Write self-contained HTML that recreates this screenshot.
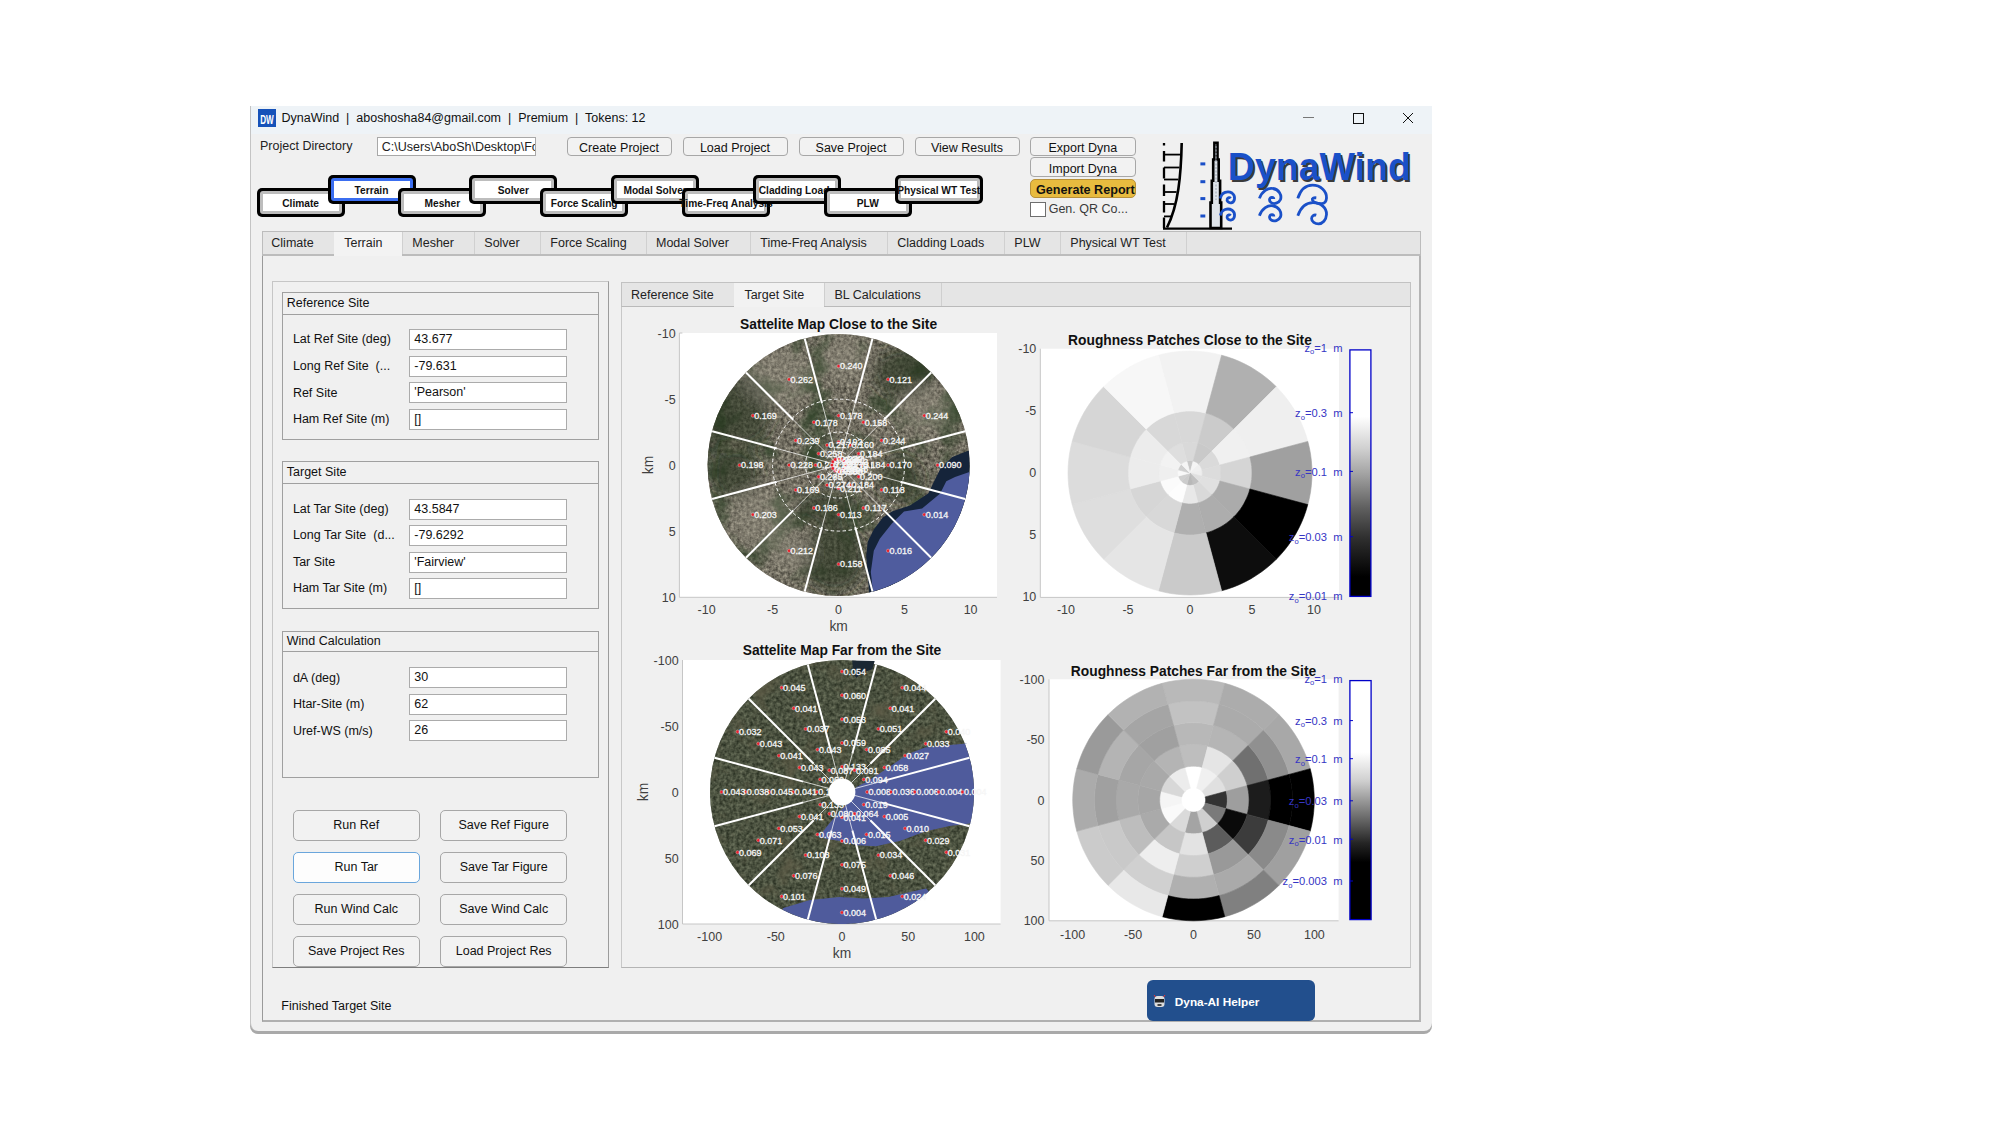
<!DOCTYPE html>
<html><head><meta charset="utf-8"><title>DynaWind</title>
<style>
html,body{margin:0;padding:0;}
body{width:2001px;height:1125px;position:relative;overflow:hidden;background:#fff;font-family:"Liberation Sans",sans-serif;font-size:12.5px;color:#000;}
.t{position:absolute;white-space:pre;line-height:1;}
.b{position:absolute;box-sizing:border-box;}
svg{position:absolute;left:0;top:0;overflow:visible;}
</style></head><body>

<div class="b" style="left:250.0px;top:108.0px;width:1182.0px;height:926.0px;background:#a9a9a9;border-radius:0 0 8px 8px;"></div>
<div class="b" style="left:250.0px;top:106.0px;width:1181.5px;height:925.0px;background:#f0f0f0;border-left:1px solid #c4c4c4;border-radius:0 0 8px 8px;"></div>
<div class="b" style="left:251.0px;top:106.0px;width:1180.5px;height:28.0px;background:#eef3f7;"></div>
<div class="b" style="left:258.0px;top:109.0px;width:17.5px;height:17.5px;background:#1652b9;"></div>
<svg width="2001" height="1125" style="pointer-events:none"><g fill="#fff" font-family="Liberation Sans" font-weight="bold"><text x="260.2" y="124" font-size="13" textLength="13.5" lengthAdjust="spacingAndGlyphs">DW</text></g><g stroke="#111" stroke-width="1" fill="none"><line x1="1303" y1="117.5" x2="1314" y2="117.5" stroke="#777"/><rect x="1353.5" y="113.5" width="10" height="10"/><line x1="1403" y1="113" x2="1413" y2="123"/><line x1="1413" y1="113" x2="1403" y2="123"/></g></svg>
<div class="t " style="left:281.5px;top:111.9px;color:#111;">DynaWind  |  aboshosha84@gmail.com  |  Premium  |  Tokens: 12</div>
<div class="t " style="left:260.0px;top:140.2px;color:#222;">Project Directory</div>
<div class="b" style="left:376.5px;top:136.5px;width:159.0px;height:19.5px;background:#fff;border:1px solid #a8a8a8;overflow:hidden;"></div>
<div class="t" style="left:377.5px;top:137.5px;width:157px;height:17px;overflow:hidden;"><div class="t" style="left:4.3px;top:3px;color:#222">C:\Users\AboSh\Desktop\Folder</div></div>
<div class="b" style="left:566.5px;top:136.5px;width:105.0px;height:19.5px;background:#f2f2f2;border:1px solid #a7a7a7;border-radius:4px;"></div>
<div class="t" style="left:566.5px;width:105.0px;top:142.4px;text-align:center;color:#111;">Create Project</div>
<div class="b" style="left:682.5px;top:136.5px;width:105.0px;height:19.5px;background:#f2f2f2;border:1px solid #a7a7a7;border-radius:4px;"></div>
<div class="t" style="left:682.5px;width:105.0px;top:142.4px;text-align:center;color:#111;">Load Project</div>
<div class="b" style="left:798.5px;top:136.5px;width:105.0px;height:19.5px;background:#f2f2f2;border:1px solid #a7a7a7;border-radius:4px;"></div>
<div class="t" style="left:798.5px;width:105.0px;top:142.4px;text-align:center;color:#111;">Save Project</div>
<div class="b" style="left:914.5px;top:136.5px;width:105.0px;height:19.5px;background:#f2f2f2;border:1px solid #a7a7a7;border-radius:4px;"></div>
<div class="t" style="left:914.5px;width:105.0px;top:142.4px;text-align:center;color:#111;">View Results</div>
<div class="b" style="left:1030.0px;top:136.5px;width:105.7px;height:19.5px;background:#f2f2f2;border:1px solid #a7a7a7;border-radius:4px;"></div>
<div class="t" style="left:1030.0px;width:105.7px;top:142.4px;text-align:center;color:#111;">Export Dyna</div>
<div class="b" style="left:1030.0px;top:157.4px;width:105.7px;height:19.6px;background:#f2f2f2;border:1px solid #a7a7a7;border-radius:4px;"></div>
<div class="t" style="left:1030.0px;width:105.7px;top:163.4px;text-align:center;color:#111;">Import Dyna</div>
<div class="b" style="left:1030.0px;top:178.6px;width:105.7px;height:19.6px;background:#e8bb3f;border:1px solid #b8913a;border-radius:5px;overflow:hidden;"></div>
<div class="b" style="left:1031px;top:179.6px;width:103.7px;height:17.6px;overflow:hidden;"><div class="t" style="left:5px;top:4.2px;font-weight:bold;font-size:12.6px;color:#111">Generate Report</div></div>
<div class="b" style="left:1030.0px;top:202.2px;width:15.5px;height:14.6px;background:#fff;border:1px solid #6e6e6e;"></div>
<div class="t " style="left:1048.7px;top:203.0px;color:#3a3a3a;">Gen. QR Co...</div>
<div class="b" style="left:256.6px;top:188.4px;width:88.0px;height:28.4px;background:#000;border-radius:5px;"></div>
<div class="b" style="left:259.6px;top:191.4px;width:82.0px;height:22.4px;background:#fff;border:3px solid #bdbdbd;border-radius:3px;box-shadow:inset 0 0 0 1.2px rgba(255,255,255,0.25);"></div>
<div class="t" style="left:236.6px;width:128.0px;top:198.7px;text-align:center;font-size:10.2px;font-weight:bold;color:#111;">Climate</div>
<div class="b" style="left:327.5px;top:175.4px;width:88.0px;height:28.4px;background:#000;border-radius:5px;"></div>
<div class="b" style="left:330.5px;top:178.4px;width:82.0px;height:22.4px;background:#fff;border:3px solid #3b6ef0;border-radius:3px;box-shadow:inset 0 0 0 1.2px rgba(255,255,255,0.25);"></div>
<div class="t" style="left:307.5px;width:128.0px;top:185.7px;text-align:center;font-size:10.2px;font-weight:bold;color:#111;">Terrain</div>
<div class="b" style="left:398.4px;top:188.4px;width:88.0px;height:28.4px;background:#000;border-radius:5px;"></div>
<div class="b" style="left:401.4px;top:191.4px;width:82.0px;height:22.4px;background:#fff;border:3px solid #bdbdbd;border-radius:3px;box-shadow:inset 0 0 0 1.2px rgba(255,255,255,0.25);"></div>
<div class="t" style="left:378.4px;width:128.0px;top:198.7px;text-align:center;font-size:10.2px;font-weight:bold;color:#111;">Mesher</div>
<div class="b" style="left:469.3px;top:175.4px;width:88.0px;height:28.4px;background:#000;border-radius:5px;"></div>
<div class="b" style="left:472.3px;top:178.4px;width:82.0px;height:22.4px;background:#fff;border:3px solid #bdbdbd;border-radius:3px;box-shadow:inset 0 0 0 1.2px rgba(255,255,255,0.25);"></div>
<div class="t" style="left:449.3px;width:128.0px;top:185.7px;text-align:center;font-size:10.2px;font-weight:bold;color:#111;">Solver</div>
<div class="b" style="left:540.2px;top:188.4px;width:88.0px;height:28.4px;background:#000;border-radius:5px;"></div>
<div class="b" style="left:543.2px;top:191.4px;width:82.0px;height:22.4px;background:#fff;border:3px solid #bdbdbd;border-radius:3px;box-shadow:inset 0 0 0 1.2px rgba(255,255,255,0.25);"></div>
<div class="t" style="left:520.2px;width:128.0px;top:198.7px;text-align:center;font-size:10.2px;font-weight:bold;color:#111;">Force Scaling</div>
<div class="b" style="left:611.1px;top:175.4px;width:88.0px;height:28.4px;background:#000;border-radius:5px;"></div>
<div class="b" style="left:614.1px;top:178.4px;width:82.0px;height:22.4px;background:#fff;border:3px solid #bdbdbd;border-radius:3px;box-shadow:inset 0 0 0 1.2px rgba(255,255,255,0.25);"></div>
<div class="t" style="left:591.1px;width:128.0px;top:185.7px;text-align:center;font-size:10.2px;font-weight:bold;color:#111;">Modal Solver</div>
<div class="b" style="left:682.0px;top:188.4px;width:88.0px;height:28.4px;background:#000;border-radius:5px;"></div>
<div class="b" style="left:685.0px;top:191.4px;width:82.0px;height:22.4px;background:#fff;border:3px solid #bdbdbd;border-radius:3px;box-shadow:inset 0 0 0 1.2px rgba(255,255,255,0.25);"></div>
<div class="t" style="left:662.0px;width:128.0px;top:198.7px;text-align:center;font-size:10.2px;font-weight:bold;color:#111;">Time-Freq Analysis</div>
<div class="b" style="left:752.9px;top:175.4px;width:88.0px;height:28.4px;background:#000;border-radius:5px;"></div>
<div class="b" style="left:755.9px;top:178.4px;width:82.0px;height:22.4px;background:#fff;border:3px solid #bdbdbd;border-radius:3px;box-shadow:inset 0 0 0 1.2px rgba(255,255,255,0.25);"></div>
<div class="t" style="left:732.9px;width:128.0px;top:185.7px;text-align:center;font-size:10.2px;font-weight:bold;color:#111;">Cladding Loads</div>
<div class="b" style="left:823.8px;top:188.4px;width:88.0px;height:28.4px;background:#000;border-radius:5px;"></div>
<div class="b" style="left:826.8px;top:191.4px;width:82.0px;height:22.4px;background:#fff;border:3px solid #bdbdbd;border-radius:3px;box-shadow:inset 0 0 0 1.2px rgba(255,255,255,0.25);"></div>
<div class="t" style="left:803.8px;width:128.0px;top:198.7px;text-align:center;font-size:10.2px;font-weight:bold;color:#111;">PLW</div>
<div class="b" style="left:894.7px;top:175.4px;width:88.0px;height:28.4px;background:#000;border-radius:5px;"></div>
<div class="b" style="left:897.7px;top:178.4px;width:82.0px;height:22.4px;background:#fff;border:3px solid #bdbdbd;border-radius:3px;box-shadow:inset 0 0 0 1.2px rgba(255,255,255,0.25);"></div>
<div class="t" style="left:874.7px;width:128.0px;top:185.7px;text-align:center;font-size:10.2px;font-weight:bold;color:#111;">Physical WT Test</div>
<svg width="2001" height="1125">
<g stroke="#000" fill="none">
<path d="M1164,143 L1164,145.5 M1164,151 L1164,161.5 M1164,167.5 L1164,178.5 M1164,184.5 L1164,196 M1164,201 L1164,212.5 M1164,217.5 L1164,228" stroke-width="2.3"/>
<path d="M1181.7,143 C1181,175 1178.5,205 1167,227.5" stroke-width="2.6"/>
<g stroke-width="1.8"><line x1="1164" y1="154.6" x2="1180.5" y2="154.6"/><line x1="1164" y1="167.5" x2="1179.5" y2="167.5"/><line x1="1164" y1="179.5" x2="1178.3" y2="179.5"/><line x1="1164" y1="192" x2="1176.5" y2="192"/><line x1="1164" y1="204" x2="1174.3" y2="204"/><line x1="1164" y1="216.4" x2="1171" y2="216.4"/></g>
<line x1="1163" y1="228.6" x2="1232" y2="228.6" stroke-width="2.2"/>
<path d="M1210.5,228 L1210.5,202.6 L1211.8,202.6 L1211.8,180.8 L1213.2,180.8 L1213.2,159.5 L1214.4,159.5 L1214.4,142.8 L1217.5,142.8 L1217.5,159.5 L1218.7,159.5 L1218.7,180.8 L1220.1,180.8 L1220.1,202.6 L1221.2,202.6 L1221.2,228 Z" stroke-width="2.6" fill="#dfe4ea"/>
<line x1="1216" y1="146" x2="1216" y2="200" stroke="#9aa4b0" stroke-width="1" stroke-dasharray="2,1.5"/>
</g>
<g fill="#1a4fc8"><rect x="1200.4" y="162.4" width="4.9" height="3"/><rect x="1200.4" y="180.2" width="4.9" height="3"/><rect x="1200.4" y="197.1" width="4.9" height="3"/><rect x="1200.4" y="214.5" width="4.9" height="3"/></g>
<text x="1229.5" y="181.5" font-family="Liberation Sans" font-weight="bold" font-size="38.5" fill="#3a3a3a" textLength="183" lengthAdjust="spacingAndGlyphs">DynaWind</text>
<text x="1227.8" y="179.8" font-family="Liberation Sans" font-weight="bold" font-size="38.5" fill="#1a50c8" textLength="183" lengthAdjust="spacingAndGlyphs">DynaWind</text>
<g stroke="#1a50c8" stroke-width="2.8" fill="none" stroke-linecap="butt">
<path d="M1220.4,198.4 C1221.5,192 1228,190.5 1232,193 C1236,196 1235,202 1231.2,202.8 C1228.5,203.2 1226.5,201 1227.2,199 C1227.8,197.5 1229.8,197.3 1230.6,198.4"/>
<path d="M1220.4,215.6 C1221.5,209.2 1228,207.7 1232,210.2 C1236,213.2 1235,219.2 1231.2,220 C1228.5,220.4 1226.5,218.2 1227.2,216.2 C1227.8,214.7 1229.8,214.5 1230.6,215.6"/>
<path d="M1259.4,198.4 C1262,191 1268,187.5 1273,188.5 C1279,189.5 1282,195 1280.5,199.5 C1279,203 1274,204.8 1271,202.5 C1268.5,200.5 1269.5,197.2 1272,197.3 C1273,197.4 1273.8,198.2 1273.8,199"/>
<path d="M1259.4,215.8 C1262,208.4 1268,204.9 1273,205.9 C1279,206.9 1282,212.4 1280.5,216.9 C1279,220.4 1274,222.2 1271,219.9 C1268.5,217.9 1269.5,214.6 1272,214.7 C1273,214.8 1273.8,215.6 1273.8,216.4"/>
<path d="M1297.8,198.4 C1300.5,190 1306,185.2 1312.5,185.2 C1320.5,185.2 1326.8,191 1326.5,198 C1326.3,201.5 1324.5,203.6 1321.5,203.6 C1318,203.6 1313.5,202.5 1312.4,200 C1311.8,198.5 1313.5,197.5 1316.3,197.8"/>
<path d="M1297.8,215.8 C1300.5,208 1306,202.6 1313,202.6 C1321,202.6 1326.8,208 1326.5,214.5 C1326.2,220 1322.5,223.8 1318.5,223.8 C1315,223.8 1311.5,221.5 1311.6,218.5 C1311.7,216 1314,214.5 1316.3,215.2"/>
</g>
</svg>
<div class="b" style="left:261.5px;top:255.0px;width:1159.5px;height:766.5px;background:#f0f0f0;border-left:1px solid #9a9a9a;border-right:2px solid #b4b4b4;border-bottom:2px solid #b0b0b0;"></div>
<div class="b" style="left:261.5px;top:230.5px;width:1159.5px;height:25.5px;background:#e5e5e5;border:1px solid #bcbcbc;border-bottom:2px solid #bcbcbc;"></div>
<div class="b" style="left:333.9px;top:231.5px;width:1.0px;height:22.5px;background:#d0d0d0;"></div>
<div class="t " style="left:271.3px;top:236.7px;color:#222;">Climate</div>
<div class="b" style="left:334.4px;top:231.5px;width:68.1px;height:24.5px;background:#f3f3f3;"></div>
<div class="b" style="left:402.0px;top:231.5px;width:1.0px;height:22.5px;background:#d0d0d0;"></div>
<div class="t " style="left:344.2px;top:236.7px;color:#222;">Terrain</div>
<div class="b" style="left:474.0px;top:231.5px;width:1.0px;height:22.5px;background:#d0d0d0;"></div>
<div class="t " style="left:412.3px;top:236.7px;color:#222;">Mesher</div>
<div class="b" style="left:540.0px;top:231.5px;width:1.0px;height:22.5px;background:#d0d0d0;"></div>
<div class="t " style="left:484.3px;top:236.7px;color:#222;">Solver</div>
<div class="b" style="left:645.8px;top:231.5px;width:1.0px;height:22.5px;background:#d0d0d0;"></div>
<div class="t " style="left:550.3px;top:236.7px;color:#222;">Force Scaling</div>
<div class="b" style="left:750.0px;top:231.5px;width:1.0px;height:22.5px;background:#d0d0d0;"></div>
<div class="t " style="left:656.0px;top:236.7px;color:#222;">Modal Solver</div>
<div class="b" style="left:887.0px;top:231.5px;width:1.0px;height:22.5px;background:#d0d0d0;"></div>
<div class="t " style="left:760.3px;top:236.7px;color:#222;">Time-Freq Analysis</div>
<div class="b" style="left:1004.0px;top:231.5px;width:1.0px;height:22.5px;background:#d0d0d0;"></div>
<div class="t " style="left:897.3px;top:236.7px;color:#222;">Cladding Loads</div>
<div class="b" style="left:1060.0px;top:231.5px;width:1.0px;height:22.5px;background:#d0d0d0;"></div>
<div class="t " style="left:1014.3px;top:236.7px;color:#222;">PLW</div>
<div class="b" style="left:1185.8px;top:231.5px;width:1.0px;height:22.5px;background:#d0d0d0;"></div>
<div class="t " style="left:1070.3px;top:236.7px;color:#222;">Physical WT Test</div>
<div class="b" style="left:272.0px;top:281.0px;width:337.0px;height:686.5px;border:1px solid #c6c6c6;border-right-color:#9c9c9c;border-bottom-color:#7e7e7e;"></div>
<div class="b" style="left:282.4px;top:292.4px;width:316.6px;height:147.6px;border:1px solid #a0a0a0;"></div>
<div class="b" style="left:283.4px;top:313.6px;width:314.6px;height:1.0px;background:#a0a0a0;"></div>
<div class="t " style="left:286.8px;top:296.5px;color:#111;">Reference Site</div>
<div class="b" style="left:409.3px;top:329.1px;width:157.5px;height:21.0px;background:#fff;border:1px solid #ababab;"></div>
<div class="t " style="left:292.9px;top:333.4px;color:#111;">Lat Ref Site (deg)</div>
<div class="t " style="left:414.3px;top:333.1px;color:#111;">43.677</div>
<div class="b" style="left:409.3px;top:355.6px;width:157.5px;height:21.0px;background:#fff;border:1px solid #ababab;"></div>
<div class="t " style="left:292.9px;top:359.9px;color:#111;">Long Ref Site  (...</div>
<div class="t " style="left:414.3px;top:359.6px;color:#111;">-79.631</div>
<div class="b" style="left:409.3px;top:382.2px;width:157.5px;height:21.0px;background:#fff;border:1px solid #ababab;"></div>
<div class="t " style="left:292.9px;top:386.5px;color:#111;">Ref Site</div>
<div class="t " style="left:414.3px;top:386.2px;color:#111;">'Pearson'</div>
<div class="b" style="left:409.3px;top:408.5px;width:157.5px;height:21.0px;background:#fff;border:1px solid #ababab;"></div>
<div class="t " style="left:292.9px;top:412.8px;color:#111;">Ham Ref Site (m)</div>
<div class="t " style="left:414.3px;top:412.5px;color:#111;">[]</div>
<div class="b" style="left:282.4px;top:461.4px;width:316.6px;height:147.6px;border:1px solid #a0a0a0;"></div>
<div class="b" style="left:283.4px;top:482.5px;width:314.6px;height:1.0px;background:#a0a0a0;"></div>
<div class="t " style="left:286.8px;top:465.5px;color:#111;">Target Site</div>
<div class="b" style="left:409.3px;top:498.5px;width:157.5px;height:21.0px;background:#fff;border:1px solid #ababab;"></div>
<div class="t " style="left:292.9px;top:502.8px;color:#111;">Lat Tar Site (deg)</div>
<div class="t " style="left:414.3px;top:502.5px;color:#111;">43.5847</div>
<div class="b" style="left:409.3px;top:525.0px;width:157.5px;height:21.0px;background:#fff;border:1px solid #ababab;"></div>
<div class="t " style="left:292.9px;top:529.3px;color:#111;">Long Tar Site  (d...</div>
<div class="t " style="left:414.3px;top:529.0px;color:#111;">-79.6292</div>
<div class="b" style="left:409.3px;top:551.5px;width:157.5px;height:21.0px;background:#fff;border:1px solid #ababab;"></div>
<div class="t " style="left:292.9px;top:555.8px;color:#111;">Tar Site</div>
<div class="t " style="left:414.3px;top:555.5px;color:#111;">'Fairview'</div>
<div class="b" style="left:409.3px;top:577.8px;width:157.5px;height:21.0px;background:#fff;border:1px solid #ababab;"></div>
<div class="t " style="left:292.9px;top:582.1px;color:#111;">Ham Tar Site (m)</div>
<div class="t " style="left:414.3px;top:581.8px;color:#111;">[]</div>
<div class="b" style="left:282.4px;top:630.5px;width:316.6px;height:147.0px;border:1px solid #a0a0a0;"></div>
<div class="b" style="left:283.4px;top:651.4px;width:314.6px;height:1.0px;background:#a0a0a0;"></div>
<div class="t " style="left:286.8px;top:634.6px;color:#111;">Wind Calculation</div>
<div class="b" style="left:409.3px;top:667.4px;width:157.5px;height:21.0px;background:#fff;border:1px solid #ababab;"></div>
<div class="t " style="left:292.9px;top:671.7px;color:#111;">dA (deg)</div>
<div class="t " style="left:414.3px;top:671.4px;color:#111;">30</div>
<div class="b" style="left:409.3px;top:693.8px;width:157.5px;height:21.0px;background:#fff;border:1px solid #ababab;"></div>
<div class="t " style="left:292.9px;top:698.1px;color:#111;">Htar-Site (m)</div>
<div class="t " style="left:414.3px;top:697.8px;color:#111;">62</div>
<div class="b" style="left:409.3px;top:720.2px;width:157.5px;height:21.0px;background:#fff;border:1px solid #ababab;"></div>
<div class="t " style="left:292.9px;top:724.5px;color:#111;">Uref-WS (m/s)</div>
<div class="t " style="left:414.3px;top:724.2px;color:#111;">26</div>
<div class="b" style="left:293.0px;top:809.5px;width:126.5px;height:31.0px;background:#f2f2f2;border:1px solid #a7a7a7;border-radius:5px;"></div>
<div class="t" style="left:293.0px;width:126.5px;top:818.7px;text-align:center;color:#111;">Run Ref</div>
<div class="b" style="left:440.4px;top:809.5px;width:126.6px;height:31.0px;background:#f2f2f2;border:1px solid #a7a7a7;border-radius:5px;"></div>
<div class="t" style="left:440.4px;width:126.6px;top:818.7px;text-align:center;color:#111;">Save Ref Figure</div>
<div class="b" style="left:293.0px;top:851.5px;width:126.5px;height:31.0px;background:#fdfdfd;border:1px solid #6aa6dc;border-radius:5px;"></div>
<div class="t" style="left:293.0px;width:126.5px;top:860.7px;text-align:center;color:#111;">Run Tar</div>
<div class="b" style="left:440.4px;top:851.5px;width:126.6px;height:31.0px;background:#f2f2f2;border:1px solid #a7a7a7;border-radius:5px;"></div>
<div class="t" style="left:440.4px;width:126.6px;top:860.7px;text-align:center;color:#111;">Save Tar Figure</div>
<div class="b" style="left:293.0px;top:893.5px;width:126.5px;height:31.0px;background:#f2f2f2;border:1px solid #a7a7a7;border-radius:5px;"></div>
<div class="t" style="left:293.0px;width:126.5px;top:902.7px;text-align:center;color:#111;">Run Wind Calc</div>
<div class="b" style="left:440.4px;top:893.5px;width:126.6px;height:31.0px;background:#f2f2f2;border:1px solid #a7a7a7;border-radius:5px;"></div>
<div class="t" style="left:440.4px;width:126.6px;top:902.7px;text-align:center;color:#111;">Save Wind Calc</div>
<div class="b" style="left:293.0px;top:935.5px;width:126.5px;height:31.0px;background:#f2f2f2;border:1px solid #a7a7a7;border-radius:5px;"></div>
<div class="t" style="left:293.0px;width:126.5px;top:944.7px;text-align:center;color:#111;">Save Project Res</div>
<div class="b" style="left:440.4px;top:935.5px;width:126.6px;height:31.0px;background:#f2f2f2;border:1px solid #a7a7a7;border-radius:5px;"></div>
<div class="t" style="left:440.4px;width:126.6px;top:944.7px;text-align:center;color:#111;">Load Project Res</div>
<div class="t " style="left:281.3px;top:1000.2px;color:#111;">Finished Target Site</div>
<div class="b" style="left:1147.0px;top:980.2px;width:168.0px;height:41.0px;background:#224f8d;border-radius:6px;"></div>
<div class="t " style="left:1174.8px;top:997.0px;font-size:11.8px;font-weight:bold;color:#fff;">Dyna-AI Helper</div>
<svg width="2001" height="1125"><g><rect x="1154.5" y="996" width="10" height="11" rx="3" fill="#ddd"/><rect x="1155" y="999" width="9" height="3.5" fill="#222"/><rect x="1157.5" y="1004" width="4" height="2" fill="#444"/><path d="M1154,995 l1.5,2 M1165,995 l-1.5,2" stroke="#e33" stroke-width="1"/></g></svg>
<div class="b" style="left:620.5px;top:306.0px;width:790.5px;height:661.5px;background:#f0f0f0;border:1px solid #c8c8c8;border-top:none;border-bottom-color:#b4b4b4;"></div>
<div class="b" style="left:621.0px;top:281.5px;width:790.0px;height:25.5px;background:#e5e5e5;border:1px solid #c2c2c2;border-bottom:1.5px solid #bababa;"></div>
<div class="b" style="left:733.9px;top:282.5px;width:1.0px;height:23.0px;background:#cfcfcf;"></div>
<div class="t " style="left:631.0px;top:288.9px;color:#222;">Reference Site</div>
<div class="b" style="left:734.4px;top:282.5px;width:90.0px;height:24.5px;background:#f2f2f2;"></div>
<div class="b" style="left:823.9px;top:282.5px;width:1.0px;height:23.0px;background:#cfcfcf;"></div>
<div class="t " style="left:744.4px;top:288.9px;color:#222;">Target Site</div>
<div class="b" style="left:940.8px;top:282.5px;width:1.0px;height:23.0px;background:#cfcfcf;"></div>
<div class="t " style="left:834.4px;top:288.9px;color:#222;">BL Calculations</div>
<svg width="2001" height="1125" font-family="Liberation Sans">
<defs>
<filter id="texA" x="0" y="0" width="100%" height="100%" filterUnits="objectBoundingBox" color-interpolation-filters="sRGB">
<feTurbulence type="fractalNoise" baseFrequency="0.32" numOctaves="3" seed="3" result="n"/>
<feColorMatrix in="n" type="matrix" values="1.0 0 0 0 -0.05  0.98 0 0 0 -0.06  0.9 0 0 0 -0.07  0 0 0 0 0.6" result="c"/>
<feComposite in="c" in2="SourceGraphic" operator="in"/>
</filter>
<filter id="texG" x="0" y="0" width="100%" height="100%" filterUnits="objectBoundingBox" color-interpolation-filters="sRGB">
<feTurbulence type="fractalNoise" baseFrequency="0.03" numOctaves="4" seed="11" result="n"/>
<feColorMatrix in="n" type="matrix" values="0 0 0 0 0.20  0 0 0 0 0.27  0 0 0 0 0.17  3.0 0 0 0 -1.5" result="c"/>
<feComposite in="c" in2="SourceGraphic" operator="in"/>
</filter>
<filter id="texG2" x="0" y="0" width="100%" height="100%" filterUnits="objectBoundingBox" color-interpolation-filters="sRGB">
<feTurbulence type="fractalNoise" baseFrequency="0.04" numOctaves="4" seed="21" result="n"/>
<feColorMatrix in="n" type="matrix" values="0 0 0 0 0.36  0 0 0 0 0.35  0 0 0 0 0.27  2.5 0 0 0 -1.35" result="c"/>
<feComposite in="c" in2="SourceGraphic" operator="in"/>
</filter>
<filter id="texF" x="0" y="0" width="100%" height="100%" filterUnits="objectBoundingBox" color-interpolation-filters="sRGB">
<feTurbulence type="fractalNoise" baseFrequency="0.3" numOctaves="2" seed="5" result="n"/>
<feColorMatrix in="n" type="matrix" values="0.8 0 0 0 -0.08  0.8 0 0 0 -0.06  0.7 0 0 0 -0.08  0 0 0 0 0.5" result="c"/>
<feComposite in="c" in2="SourceGraphic" operator="in"/>
</filter>
<filter id="blur8" x="-50%" y="-50%" width="200%" height="200%"><feGaussianBlur stdDeviation="7"/></filter>
<clipPath id="circ1"><circle cx="838.6" cy="465.1" r="131"/></clipPath>
<clipPath id="ax1"><rect x="679.4" y="333" width="317.6" height="264.3"/></clipPath>
<clipPath id="ax3"><rect x="682.5" y="660" width="318.1" height="264"/></clipPath>
<linearGradient id="cb1" x1="0" y1="0" x2="0" y2="1">
<stop offset="0" stop-color="#fff"/><stop offset="0.27" stop-color="#fff"/><stop offset="0.40" stop-color="#d0d0d0"/>
<stop offset="0.50" stop-color="#a4a4a4"/><stop offset="0.64" stop-color="#606060"/><stop offset="0.76" stop-color="#303030"/>
<stop offset="0.92" stop-color="#000"/><stop offset="1" stop-color="#000"/></linearGradient>
<linearGradient id="cb2" x1="0" y1="0" x2="0" y2="1">
<stop offset="0" stop-color="#fff"/><stop offset="0.30" stop-color="#fff"/><stop offset="0.42" stop-color="#cfcfcf"/>
<stop offset="0.50" stop-color="#9a9a9a"/><stop offset="0.60" stop-color="#5a5a5a"/><stop offset="0.68" stop-color="#252525"/>
<stop offset="0.76" stop-color="#000"/><stop offset="1" stop-color="#000"/></linearGradient>
</defs>
<rect x="679.4" y="333" width="317.6" height="264.3" fill="#fff"/>
<path d="M679.4,333 L679.4,597.3 L997,597.3" stroke="#c6c6c6" fill="none"/>
<line x1="679.4" y1="333" x2="682.4" y2="333" stroke="#c6c6c6"/>
<circle cx="838.6" cy="465.1" r="131" fill="#726e61"/>
<circle cx="838.6" cy="465.1" r="131" fill="#000" filter="url(#texA)"/>
<circle cx="838.6" cy="465.1" r="131" fill="#000" filter="url(#texG)"/>
<g clip-path="url(#circ1)"><g filter="url(#blur8)">
<ellipse cx="743.2" cy="409.2" rx="29" ry="36" fill="#263222" fill-opacity="0.6"/>
<ellipse cx="903.9" cy="373.2" rx="31" ry="26" fill="#263222" fill-opacity="0.6"/>
<ellipse cx="834.3" cy="557.9" rx="31" ry="34" fill="#263222" fill-opacity="0.6"/>
<ellipse cx="824.7" cy="507.5" rx="29" ry="17" fill="#263222" fill-opacity="0.6"/>
<ellipse cx="899.1" cy="478.7" rx="22" ry="22" fill="#263222" fill-opacity="0.6"/>
<ellipse cx="736" cy="474" rx="24" ry="24" fill="#263222" fill-opacity="0.6"/>
<ellipse cx="712" cy="430" rx="12" ry="30" fill="#263222" fill-opacity="0.6"/>
<ellipse cx="779.2" cy="378" rx="36" ry="29" fill="#a09a8c" fill-opacity="0.35"/>
<ellipse cx="844" cy="358.8" rx="24" ry="22" fill="#a09a8c" fill-opacity="0.35"/>
<ellipse cx="925.5" cy="409.2" rx="26" ry="26" fill="#a09a8c" fill-opacity="0.35"/>
<ellipse cx="760" cy="517" rx="31" ry="29" fill="#a09a8c" fill-opacity="0.35"/>
<ellipse cx="791.2" cy="553" rx="22" ry="19" fill="#a09a8c" fill-opacity="0.35"/>
</g></g>
<polygon points="967.4,451.0 952.3,457.0 940.2,469.0 934.2,481.3 928.2,493.4 910.0,505.4 891.9,511.5 882.8,517.5 873.8,529.6 867.7,541.7 866.2,556.8 867.7,571.9 869.0,593.0 868.9,592.5 876.5,590.5 884.0,588.0 891.3,585.0 898.4,581.6 905.4,577.8 912.0,573.6 918.4,569.0 924.5,564.0 930.3,558.6 935.8,552.9 940.9,546.9 945.7,540.6 950.0,534.0 954.0,527.2 957.5,520.1 960.6,512.9 963.2,505.4 965.4,497.8 967.2,490.1 968.5,482.3 969.3,474.5 969.6,466.6 969.4,458.7 968.8,450.8" fill="#15243a"/>
<polygon points="969.4,472.0 955.0,477.0 946.3,481.3 940.2,493.4 922.1,508.5 904.0,511.5 891.9,523.6 879.8,538.7 873.8,550.8 870.8,571.9 873.0,592.0 872.9,591.5 879.4,589.6 885.9,587.3 892.2,584.6 898.3,581.7 904.4,578.4 910.2,574.8 915.8,570.9 921.2,566.8 926.4,562.3 931.4,557.6 936.1,552.6 940.5,547.4 944.7,542.0 948.5,536.3 952.1,530.5 955.4,524.5 958.3,518.3 960.9,512.0 963.2,505.5 965.1,499.0 966.7,492.3 968.0,485.6 968.9,478.8 969.4,472.0" fill="#4f5c9e"/>
<circle cx="838.6" cy="465.1" r="13.2" fill="none" stroke="#fff" stroke-opacity="0.95" stroke-width="1" stroke-dasharray="3.5,2.5"/>
<circle cx="838.6" cy="465.1" r="33" fill="none" stroke="#fff" stroke-opacity="0.95" stroke-width="1" stroke-dasharray="3.5,2.5"/>
<circle cx="838.6" cy="465.1" r="66" fill="none" stroke="#fff" stroke-opacity="0.95" stroke-width="1" stroke-dasharray="3.5,2.5"/>
<line x1="839.6" y1="461.2" x2="855.2" y2="403.3" stroke="#fff" stroke-opacity="0.8" stroke-width="0.9"/>
<line x1="855.2" y1="403.3" x2="872.5" y2="338.6" stroke="#fff" stroke-width="2"/>
<line x1="841.4" y1="462.3" x2="883.9" y2="419.8" stroke="#fff" stroke-opacity="0.8" stroke-width="0.9"/>
<line x1="883.9" y1="419.8" x2="931.2" y2="372.5" stroke="#fff" stroke-width="2"/>
<line x1="842.5" y1="464.1" x2="900.4" y2="448.5" stroke="#fff" stroke-opacity="0.8" stroke-width="0.9"/>
<line x1="900.4" y1="448.5" x2="965.1" y2="431.2" stroke="#fff" stroke-width="2"/>
<line x1="842.5" y1="466.1" x2="900.4" y2="481.7" stroke="#fff" stroke-opacity="0.8" stroke-width="0.9"/>
<line x1="900.4" y1="481.7" x2="965.1" y2="499.0" stroke="#fff" stroke-width="2"/>
<line x1="841.4" y1="467.9" x2="883.9" y2="510.4" stroke="#fff" stroke-opacity="0.8" stroke-width="0.9"/>
<line x1="883.9" y1="510.4" x2="931.2" y2="557.7" stroke="#fff" stroke-width="2"/>
<line x1="839.6" y1="469.0" x2="855.2" y2="526.9" stroke="#fff" stroke-opacity="0.8" stroke-width="0.9"/>
<line x1="855.2" y1="526.9" x2="872.5" y2="591.6" stroke="#fff" stroke-width="2"/>
<line x1="837.6" y1="469.0" x2="822.0" y2="526.9" stroke="#fff" stroke-opacity="0.8" stroke-width="0.9"/>
<line x1="822.0" y1="526.9" x2="804.7" y2="591.6" stroke="#fff" stroke-width="2"/>
<line x1="835.8" y1="467.9" x2="793.3" y2="510.4" stroke="#fff" stroke-opacity="0.8" stroke-width="0.9"/>
<line x1="793.3" y1="510.4" x2="746.0" y2="557.7" stroke="#fff" stroke-width="2"/>
<line x1="834.7" y1="466.1" x2="776.8" y2="481.7" stroke="#fff" stroke-opacity="0.8" stroke-width="0.9"/>
<line x1="776.8" y1="481.7" x2="712.1" y2="499.0" stroke="#fff" stroke-width="2"/>
<line x1="834.7" y1="464.1" x2="776.8" y2="448.5" stroke="#fff" stroke-opacity="0.8" stroke-width="0.9"/>
<line x1="776.8" y1="448.5" x2="712.1" y2="431.2" stroke="#fff" stroke-width="2"/>
<line x1="835.8" y1="462.3" x2="793.3" y2="419.8" stroke="#fff" stroke-opacity="0.8" stroke-width="0.9"/>
<line x1="793.3" y1="419.8" x2="746.0" y2="372.5" stroke="#fff" stroke-width="2"/>
<line x1="837.6" y1="461.2" x2="822.0" y2="403.3" stroke="#fff" stroke-opacity="0.8" stroke-width="0.9"/>
<line x1="822.0" y1="403.3" x2="804.7" y2="338.6" stroke="#fff" stroke-width="2"/>
<g font-size="9" fill="#f6f6f6" stroke="#f6f6f6" stroke-width="0.3">
<circle cx="838.6" cy="366.1" r="1.7" fill="#e8232a"/><text x="840.0" y="369.4">0.240</text>
<circle cx="888.1" cy="379.4" r="1.7" fill="#e8232a"/><text x="889.5" y="382.7">0.121</text>
<circle cx="924.3" cy="415.6" r="1.7" fill="#e8232a"/><text x="925.7" y="418.9">0.244</text>
<circle cx="937.6" cy="465.1" r="1.7" fill="#e8232a"/><text x="939.0" y="468.4">0.090</text>
<circle cx="924.3" cy="514.6" r="1.7" fill="#e8232a"/><text x="925.7" y="517.9">0.014</text>
<circle cx="888.1" cy="550.8" r="1.7" fill="#e8232a"/><text x="889.5" y="554.1">0.016</text>
<circle cx="838.6" cy="564.1" r="1.7" fill="#e8232a"/><text x="840.0" y="567.4">0.158</text>
<circle cx="789.1" cy="550.8" r="1.7" fill="#e8232a"/><text x="790.5" y="554.1">0.212</text>
<circle cx="752.9" cy="514.6" r="1.7" fill="#e8232a"/><text x="754.3" y="517.9">0.203</text>
<circle cx="739.6" cy="465.1" r="1.7" fill="#e8232a"/><text x="741.0" y="468.4">0.198</text>
<circle cx="752.9" cy="415.6" r="1.7" fill="#e8232a"/><text x="754.3" y="418.9">0.169</text>
<circle cx="789.1" cy="379.4" r="1.7" fill="#e8232a"/><text x="790.5" y="382.7">0.262</text>
<circle cx="838.6" cy="415.6" r="1.7" fill="#e8232a"/><text x="840.0" y="418.9">0.178</text>
<circle cx="863.4" cy="422.2" r="1.7" fill="#e8232a"/><text x="864.8" y="425.5">0.158</text>
<circle cx="881.5" cy="440.4" r="1.7" fill="#e8232a"/><text x="882.9" y="443.7">0.244</text>
<circle cx="888.1" cy="465.1" r="1.7" fill="#e8232a"/><text x="889.5" y="468.4">0.170</text>
<circle cx="881.5" cy="489.9" r="1.7" fill="#e8232a"/><text x="882.9" y="493.2">0.118</text>
<circle cx="863.4" cy="508.0" r="1.7" fill="#e8232a"/><text x="864.8" y="511.3">0.117</text>
<circle cx="838.6" cy="514.6" r="1.7" fill="#e8232a"/><text x="840.0" y="517.9">0.113</text>
<circle cx="813.9" cy="508.0" r="1.7" fill="#e8232a"/><text x="815.2" y="511.3">0.186</text>
<circle cx="795.7" cy="489.9" r="1.7" fill="#e8232a"/><text x="797.1" y="493.2">0.169</text>
<circle cx="789.1" cy="465.1" r="1.7" fill="#e8232a"/><text x="790.5" y="468.4">0.228</text>
<circle cx="795.7" cy="440.4" r="1.7" fill="#e8232a"/><text x="797.1" y="443.7">0.239</text>
<circle cx="813.9" cy="422.2" r="1.7" fill="#e8232a"/><text x="815.2" y="425.5">0.178</text>
<circle cx="838.6" cy="442.0" r="1.7" fill="#e8232a"/><text x="840.0" y="445.3">0.192</text>
<circle cx="850.1" cy="445.1" r="1.7" fill="#e8232a"/><text x="851.5" y="448.4">0.160</text>
<circle cx="858.6" cy="453.6" r="1.7" fill="#e8232a"/><text x="860.0" y="456.9">0.184</text>
<circle cx="861.7" cy="465.1" r="1.7" fill="#e8232a"/><text x="863.1" y="468.4">0.184</text>
<circle cx="858.6" cy="476.7" r="1.7" fill="#e8232a"/><text x="860.0" y="480.0">0.200</text>
<circle cx="850.1" cy="485.1" r="1.7" fill="#e8232a"/><text x="851.5" y="488.4">0.184</text>
<circle cx="838.6" cy="488.2" r="1.7" fill="#e8232a"/><text x="840.0" y="491.5">0.211</text>
<circle cx="827.1" cy="485.1" r="1.7" fill="#e8232a"/><text x="828.5" y="488.4">0.274</text>
<circle cx="818.6" cy="476.7" r="1.7" fill="#e8232a"/><text x="820.0" y="480.0">0.285</text>
<circle cx="815.5" cy="465.1" r="1.7" fill="#e8232a"/><text x="816.9" y="468.4">0.247</text>
<circle cx="818.6" cy="453.6" r="1.7" fill="#e8232a"/><text x="820.0" y="456.9">0.258</text>
<circle cx="827.1" cy="445.1" r="1.7" fill="#e8232a"/><text x="828.5" y="448.4">0.217</text>
<circle cx="838.6" cy="458.5" r="1.7" fill="#e8232a"/><text x="840.0" y="461.8">0.270</text>
<circle cx="841.9" cy="459.4" r="1.7" fill="#e8232a"/><text x="843.3" y="462.7">0.261</text>
<circle cx="844.3" cy="461.8" r="1.7" fill="#e8232a"/><text x="845.7" y="465.1">0.212</text>
<circle cx="845.2" cy="465.1" r="1.7" fill="#e8232a"/><text x="846.6" y="468.4">0.273</text>
<circle cx="844.3" cy="468.4" r="1.7" fill="#e8232a"/><text x="845.7" y="471.7">0.248</text>
<circle cx="841.9" cy="470.8" r="1.7" fill="#e8232a"/><text x="843.3" y="474.1">0.190</text>
<circle cx="838.6" cy="471.7" r="1.7" fill="#e8232a"/><text x="840.0" y="475.0">0.300</text>
<circle cx="835.3" cy="470.8" r="1.7" fill="#e8232a"/><text x="836.7" y="474.1">0.231</text>
<circle cx="832.9" cy="468.4" r="1.7" fill="#e8232a"/><text x="834.3" y="471.7">0.256</text>
<circle cx="832.0" cy="465.1" r="1.7" fill="#e8232a"/><text x="833.4" y="468.4">0.226</text>
<circle cx="832.9" cy="461.8" r="1.7" fill="#e8232a"/><text x="834.3" y="465.1">0.283</text>
<circle cx="835.3" cy="459.4" r="1.7" fill="#e8232a"/><text x="836.7" y="462.7">0.244</text>
</g>
<text x="675.6" y="337.6" text-anchor="end" font-size="12.5" fill="#404040">-10</text>
<text x="675.6" y="403.6" text-anchor="end" font-size="12.5" fill="#404040">-5</text>
<text x="675.6" y="469.6" text-anchor="end" font-size="12.5" fill="#404040">0</text>
<text x="675.6" y="535.6" text-anchor="end" font-size="12.5" fill="#404040">5</text>
<text x="675.6" y="601.6" text-anchor="end" font-size="12.5" fill="#404040">10</text>
<text x="706.6" y="614.0" text-anchor="middle" font-size="12.5" fill="#404040">-10</text>
<text x="772.6" y="614.0" text-anchor="middle" font-size="12.5" fill="#404040">-5</text>
<text x="838.6" y="614.0" text-anchor="middle" font-size="12.5" fill="#404040">0</text>
<text x="904.6" y="614.0" text-anchor="middle" font-size="12.5" fill="#404040">5</text>
<text x="970.6" y="614.0" text-anchor="middle" font-size="12.5" fill="#404040">10</text>
<text x="838.6" y="630.6" text-anchor="middle" font-size="13.8" fill="#404040">km</text>
<text transform="translate(652.5,465) rotate(-90)" text-anchor="middle" font-size="13.8" fill="#404040">km</text>
<text x="838.6" y="328.5" text-anchor="middle" font-size="13.8" font-weight="bold" fill="#111">Sattelite Map Close to the Site</text>
<rect x="1040.3" y="348.7" width="298.7" height="248.7" fill="#fff"/>
<path d="M1040.3,348.7 L1040.3,597.4 L1339,597.4" stroke="#c6c6c6" fill="none"/>
<path d="M1186.8,461.0 L1187.4,460.9 L1188.1,460.8 L1188.7,460.7 L1189.4,460.6 L1190.0,460.6 L1190.6,460.6 L1191.3,460.7 L1191.9,460.8 L1192.6,460.9 L1193.2,461.0 L1190.0,473.0 L1190.0,473.0 L1190.0,473.0 L1190.0,473.0 L1190.0,473.0 L1190.0,473.0 L1190.0,473.0 L1190.0,473.0 L1190.0,473.0 L1190.0,473.0 L1190.0,473.0Z" fill="#c8c8c8" stroke="#c8c8c8" stroke-width="0.6"/>
<path d="M1193.2,461.0 L1193.8,461.2 L1194.4,461.4 L1195.0,461.7 L1195.6,462.0 L1196.2,462.3 L1196.8,462.6 L1197.3,463.0 L1197.8,463.4 L1198.3,463.8 L1198.8,464.2 L1190.0,473.0 L1190.0,473.0 L1190.0,473.0 L1190.0,473.0 L1190.0,473.0 L1190.0,473.0 L1190.0,473.0 L1190.0,473.0 L1190.0,473.0 L1190.0,473.0 L1190.0,473.0Z" fill="#f5f5f5" stroke="#f5f5f5" stroke-width="0.6"/>
<path d="M1198.8,464.2 L1199.2,464.7 L1199.6,465.2 L1200.0,465.7 L1200.4,466.2 L1200.7,466.8 L1201.0,467.4 L1201.3,468.0 L1201.6,468.6 L1201.8,469.2 L1202.0,469.8 L1190.0,473.0 L1190.0,473.0 L1190.0,473.0 L1190.0,473.0 L1190.0,473.0 L1190.0,473.0 L1190.0,473.0 L1190.0,473.0 L1190.0,473.0 L1190.0,473.0 L1190.0,473.0Z" fill="#f0f0f0" stroke="#f0f0f0" stroke-width="0.6"/>
<path d="M1202.0,469.8 L1202.1,470.4 L1202.2,471.1 L1202.3,471.7 L1202.4,472.4 L1202.4,473.0 L1202.4,473.6 L1202.3,474.3 L1202.2,474.9 L1202.1,475.6 L1202.0,476.2 L1190.0,473.0 L1190.0,473.0 L1190.0,473.0 L1190.0,473.0 L1190.0,473.0 L1190.0,473.0 L1190.0,473.0 L1190.0,473.0 L1190.0,473.0 L1190.0,473.0 L1190.0,473.0Z" fill="#eeeeee" stroke="#eeeeee" stroke-width="0.6"/>
<path d="M1202.0,476.2 L1201.8,476.8 L1201.6,477.4 L1201.3,478.0 L1201.0,478.6 L1200.7,479.2 L1200.4,479.8 L1200.0,480.3 L1199.6,480.8 L1199.2,481.3 L1198.8,481.8 L1190.0,473.0 L1190.0,473.0 L1190.0,473.0 L1190.0,473.0 L1190.0,473.0 L1190.0,473.0 L1190.0,473.0 L1190.0,473.0 L1190.0,473.0 L1190.0,473.0 L1190.0,473.0Z" fill="#e0e0e0" stroke="#e0e0e0" stroke-width="0.6"/>
<path d="M1198.8,481.8 L1198.3,482.2 L1197.8,482.6 L1197.3,483.0 L1196.8,483.4 L1196.2,483.7 L1195.6,484.0 L1195.0,484.3 L1194.4,484.6 L1193.8,484.8 L1193.2,485.0 L1190.0,473.0 L1190.0,473.0 L1190.0,473.0 L1190.0,473.0 L1190.0,473.0 L1190.0,473.0 L1190.0,473.0 L1190.0,473.0 L1190.0,473.0 L1190.0,473.0 L1190.0,473.0Z" fill="#c0c0c0" stroke="#c0c0c0" stroke-width="0.6"/>
<path d="M1193.2,485.0 L1192.6,485.1 L1191.9,485.2 L1191.3,485.3 L1190.6,485.4 L1190.0,485.4 L1189.4,485.4 L1188.7,485.3 L1188.1,485.2 L1187.4,485.1 L1186.8,485.0 L1190.0,473.0 L1190.0,473.0 L1190.0,473.0 L1190.0,473.0 L1190.0,473.0 L1190.0,473.0 L1190.0,473.0 L1190.0,473.0 L1190.0,473.0 L1190.0,473.0 L1190.0,473.0Z" fill="#b8b8b8" stroke="#b8b8b8" stroke-width="0.6"/>
<path d="M1186.8,485.0 L1186.2,484.8 L1185.6,484.6 L1185.0,484.3 L1184.4,484.0 L1183.8,483.7 L1183.2,483.4 L1182.7,483.0 L1182.2,482.6 L1181.7,482.2 L1181.2,481.8 L1190.0,473.0 L1190.0,473.0 L1190.0,473.0 L1190.0,473.0 L1190.0,473.0 L1190.0,473.0 L1190.0,473.0 L1190.0,473.0 L1190.0,473.0 L1190.0,473.0 L1190.0,473.0Z" fill="#cccccc" stroke="#cccccc" stroke-width="0.6"/>
<path d="M1181.2,481.8 L1180.8,481.3 L1180.4,480.8 L1180.0,480.3 L1179.6,479.8 L1179.3,479.2 L1179.0,478.6 L1178.7,478.0 L1178.4,477.4 L1178.2,476.8 L1178.0,476.2 L1190.0,473.0 L1190.0,473.0 L1190.0,473.0 L1190.0,473.0 L1190.0,473.0 L1190.0,473.0 L1190.0,473.0 L1190.0,473.0 L1190.0,473.0 L1190.0,473.0 L1190.0,473.0Z" fill="#d0d0d0" stroke="#d0d0d0" stroke-width="0.6"/>
<path d="M1178.0,476.2 L1177.9,475.6 L1177.8,474.9 L1177.7,474.3 L1177.6,473.6 L1177.6,473.0 L1177.6,472.4 L1177.7,471.7 L1177.8,471.1 L1177.9,470.4 L1178.0,469.8 L1190.0,473.0 L1190.0,473.0 L1190.0,473.0 L1190.0,473.0 L1190.0,473.0 L1190.0,473.0 L1190.0,473.0 L1190.0,473.0 L1190.0,473.0 L1190.0,473.0 L1190.0,473.0Z" fill="#f9f9f9" stroke="#f9f9f9" stroke-width="0.6"/>
<path d="M1178.0,469.8 L1178.2,469.2 L1178.4,468.6 L1178.7,468.0 L1179.0,467.4 L1179.3,466.8 L1179.6,466.2 L1180.0,465.7 L1180.4,465.2 L1180.8,464.7 L1181.2,464.2 L1190.0,473.0 L1190.0,473.0 L1190.0,473.0 L1190.0,473.0 L1190.0,473.0 L1190.0,473.0 L1190.0,473.0 L1190.0,473.0 L1190.0,473.0 L1190.0,473.0 L1190.0,473.0Z" fill="#d0d0d0" stroke="#d0d0d0" stroke-width="0.6"/>
<path d="M1181.2,464.2 L1181.7,463.8 L1182.2,463.4 L1182.7,463.0 L1183.2,462.6 L1183.8,462.3 L1184.4,462.0 L1185.0,461.7 L1185.6,461.4 L1186.2,461.2 L1186.8,461.0 L1190.0,473.0 L1190.0,473.0 L1190.0,473.0 L1190.0,473.0 L1190.0,473.0 L1190.0,473.0 L1190.0,473.0 L1190.0,473.0 L1190.0,473.0 L1190.0,473.0 L1190.0,473.0Z" fill="#f5f5f5" stroke="#f5f5f5" stroke-width="0.6"/>
<path d="M1182.0,443.1 L1183.6,442.7 L1185.2,442.4 L1186.8,442.2 L1188.4,442.0 L1190.0,442.0 L1191.6,442.0 L1193.2,442.2 L1194.8,442.4 L1196.4,442.7 L1198.0,443.1 L1193.2,461.0 L1192.6,460.9 L1191.9,460.8 L1191.3,460.7 L1190.6,460.6 L1190.0,460.6 L1189.4,460.6 L1188.7,460.7 L1188.1,460.8 L1187.4,460.9 L1186.8,461.0Z" fill="#d9d9d9" stroke="#d9d9d9" stroke-width="0.6"/>
<path d="M1198.0,443.1 L1199.6,443.5 L1201.1,444.1 L1202.6,444.7 L1204.1,445.4 L1205.5,446.2 L1206.9,447.0 L1208.2,447.9 L1209.5,448.9 L1210.7,450.0 L1211.9,451.1 L1198.8,464.2 L1198.3,463.8 L1197.8,463.4 L1197.3,463.0 L1196.8,462.6 L1196.2,462.3 L1195.6,462.0 L1195.0,461.7 L1194.4,461.4 L1193.8,461.2 L1193.2,461.0Z" fill="#c9c9c9" stroke="#c9c9c9" stroke-width="0.6"/>
<path d="M1211.9,451.1 L1213.0,452.3 L1214.1,453.5 L1215.1,454.8 L1216.0,456.1 L1216.8,457.5 L1217.6,458.9 L1218.3,460.4 L1218.9,461.9 L1219.5,463.4 L1219.9,465.0 L1202.0,469.8 L1201.8,469.2 L1201.6,468.6 L1201.3,468.0 L1201.0,467.4 L1200.7,466.8 L1200.4,466.2 L1200.0,465.7 L1199.6,465.2 L1199.2,464.7 L1198.8,464.2Z" fill="#dadada" stroke="#dadada" stroke-width="0.6"/>
<path d="M1219.9,465.0 L1220.3,466.6 L1220.6,468.2 L1220.8,469.8 L1221.0,471.4 L1221.0,473.0 L1221.0,474.6 L1220.8,476.2 L1220.6,477.8 L1220.3,479.4 L1219.9,481.0 L1202.0,476.2 L1202.1,475.6 L1202.2,474.9 L1202.3,474.3 L1202.4,473.6 L1202.4,473.0 L1202.4,472.4 L1202.3,471.7 L1202.2,471.1 L1202.1,470.4 L1202.0,469.8Z" fill="#dcdcdc" stroke="#dcdcdc" stroke-width="0.6"/>
<path d="M1219.9,481.0 L1219.5,482.6 L1218.9,484.1 L1218.3,485.6 L1217.6,487.1 L1216.8,488.5 L1216.0,489.9 L1215.1,491.2 L1214.1,492.5 L1213.0,493.7 L1211.9,494.9 L1198.8,481.8 L1199.2,481.3 L1199.6,480.8 L1200.0,480.3 L1200.4,479.8 L1200.7,479.2 L1201.0,478.6 L1201.3,478.0 L1201.6,477.4 L1201.8,476.8 L1202.0,476.2Z" fill="#e0e0e0" stroke="#e0e0e0" stroke-width="0.6"/>
<path d="M1211.9,494.9 L1210.7,496.0 L1209.5,497.1 L1208.2,498.1 L1206.9,499.0 L1205.5,499.8 L1204.1,500.6 L1202.6,501.3 L1201.1,501.9 L1199.6,502.5 L1198.0,502.9 L1193.2,485.0 L1193.8,484.8 L1194.4,484.6 L1195.0,484.3 L1195.6,484.0 L1196.2,483.7 L1196.8,483.4 L1197.3,483.0 L1197.8,482.6 L1198.3,482.2 L1198.8,481.8Z" fill="#d9d9d9" stroke="#d9d9d9" stroke-width="0.6"/>
<path d="M1198.0,502.9 L1196.4,503.3 L1194.8,503.6 L1193.2,503.8 L1191.6,504.0 L1190.0,504.0 L1188.4,504.0 L1186.8,503.8 L1185.2,503.6 L1183.6,503.3 L1182.0,502.9 L1186.8,485.0 L1187.4,485.1 L1188.1,485.2 L1188.7,485.3 L1189.4,485.4 L1190.0,485.4 L1190.6,485.4 L1191.3,485.3 L1191.9,485.2 L1192.6,485.1 L1193.2,485.0Z" fill="#e8e8e8" stroke="#e8e8e8" stroke-width="0.6"/>
<path d="M1182.0,502.9 L1180.4,502.5 L1178.9,501.9 L1177.4,501.3 L1175.9,500.6 L1174.5,499.8 L1173.1,499.0 L1171.8,498.1 L1170.5,497.1 L1169.3,496.0 L1168.1,494.9 L1181.2,481.8 L1181.7,482.2 L1182.2,482.6 L1182.7,483.0 L1183.2,483.4 L1183.8,483.7 L1184.4,484.0 L1185.0,484.3 L1185.6,484.6 L1186.2,484.8 L1186.8,485.0Z" fill="#fdfdfd" stroke="#fdfdfd" stroke-width="0.6"/>
<path d="M1168.1,494.9 L1167.0,493.7 L1165.9,492.5 L1164.9,491.2 L1164.0,489.9 L1163.2,488.5 L1162.4,487.1 L1161.7,485.6 L1161.1,484.1 L1160.5,482.6 L1160.1,481.0 L1178.0,476.2 L1178.2,476.8 L1178.4,477.4 L1178.7,478.0 L1179.0,478.6 L1179.3,479.2 L1179.6,479.8 L1180.0,480.3 L1180.4,480.8 L1180.8,481.3 L1181.2,481.8Z" fill="#fbfbfb" stroke="#fbfbfb" stroke-width="0.6"/>
<path d="M1160.1,481.0 L1159.7,479.4 L1159.4,477.8 L1159.2,476.2 L1159.0,474.6 L1159.0,473.0 L1159.0,471.4 L1159.2,469.8 L1159.4,468.2 L1159.7,466.6 L1160.1,465.0 L1178.0,469.8 L1177.9,470.4 L1177.8,471.1 L1177.7,471.7 L1177.6,472.4 L1177.6,473.0 L1177.6,473.6 L1177.7,474.3 L1177.8,474.9 L1177.9,475.6 L1178.0,476.2Z" fill="#efefef" stroke="#efefef" stroke-width="0.6"/>
<path d="M1160.1,465.0 L1160.5,463.4 L1161.1,461.9 L1161.7,460.4 L1162.4,458.9 L1163.2,457.5 L1164.0,456.1 L1164.9,454.8 L1165.9,453.5 L1167.0,452.3 L1168.1,451.1 L1181.2,464.2 L1180.8,464.7 L1180.4,465.2 L1180.0,465.7 L1179.6,466.2 L1179.3,466.8 L1179.0,467.4 L1178.7,468.0 L1178.4,468.6 L1178.2,469.2 L1178.0,469.8Z" fill="#f2f2f2" stroke="#f2f2f2" stroke-width="0.6"/>
<path d="M1168.1,451.1 L1169.3,450.0 L1170.5,448.9 L1171.8,447.9 L1173.1,447.0 L1174.5,446.2 L1175.9,445.4 L1177.4,444.7 L1178.9,444.1 L1180.4,443.5 L1182.0,443.1 L1186.8,461.0 L1186.2,461.2 L1185.6,461.4 L1185.0,461.7 L1184.4,462.0 L1183.8,462.3 L1183.2,462.6 L1182.7,463.0 L1182.2,463.4 L1181.7,463.8 L1181.2,464.2Z" fill="#dedede" stroke="#dedede" stroke-width="0.6"/>
<path d="M1174.0,413.1 L1177.1,412.4 L1180.3,411.8 L1183.5,411.3 L1186.8,411.1 L1190.0,411.0 L1193.2,411.1 L1196.5,411.3 L1199.7,411.8 L1202.9,412.4 L1206.0,413.1 L1198.0,443.1 L1196.4,442.7 L1194.8,442.4 L1193.2,442.2 L1191.6,442.0 L1190.0,442.0 L1188.4,442.0 L1186.8,442.2 L1185.2,442.4 L1183.6,442.7 L1182.0,443.1Z" fill="#d8d8d8" stroke="#d8d8d8" stroke-width="0.6"/>
<path d="M1206.0,413.1 L1209.2,414.0 L1212.2,415.1 L1215.2,416.4 L1218.1,417.8 L1221.0,419.3 L1223.8,421.0 L1226.4,422.8 L1229.0,424.8 L1231.5,426.9 L1233.8,429.2 L1211.9,451.1 L1210.7,450.0 L1209.5,448.9 L1208.2,447.9 L1206.9,447.0 L1205.5,446.2 L1204.1,445.4 L1202.6,444.7 L1201.1,444.1 L1199.6,443.5 L1198.0,443.1Z" fill="#cbcbcb" stroke="#cbcbcb" stroke-width="0.6"/>
<path d="M1233.8,429.2 L1236.1,431.5 L1238.2,434.0 L1240.2,436.6 L1242.0,439.2 L1243.7,442.0 L1245.2,444.9 L1246.6,447.8 L1247.9,450.8 L1249.0,453.8 L1249.9,457.0 L1219.9,465.0 L1219.5,463.4 L1218.9,461.9 L1218.3,460.4 L1217.6,458.9 L1216.8,457.5 L1216.0,456.1 L1215.1,454.8 L1214.1,453.5 L1213.0,452.3 L1211.9,451.1Z" fill="#f0f0f0" stroke="#f0f0f0" stroke-width="0.6"/>
<path d="M1249.9,457.0 L1250.6,460.1 L1251.2,463.3 L1251.7,466.5 L1251.9,469.8 L1252.0,473.0 L1251.9,476.2 L1251.7,479.5 L1251.2,482.7 L1250.6,485.9 L1249.9,489.0 L1219.9,481.0 L1220.3,479.4 L1220.6,477.8 L1220.8,476.2 L1221.0,474.6 L1221.0,473.0 L1221.0,471.4 L1220.8,469.8 L1220.6,468.2 L1220.3,466.6 L1219.9,465.0Z" fill="#d5d5d5" stroke="#d5d5d5" stroke-width="0.6"/>
<path d="M1249.9,489.0 L1249.0,492.2 L1247.9,495.2 L1246.6,498.2 L1245.2,501.1 L1243.7,504.0 L1242.0,506.8 L1240.2,509.4 L1238.2,512.0 L1236.1,514.5 L1233.8,516.8 L1211.9,494.9 L1213.0,493.7 L1214.1,492.5 L1215.1,491.2 L1216.0,489.9 L1216.8,488.5 L1217.6,487.1 L1218.3,485.6 L1218.9,484.1 L1219.5,482.6 L1219.9,481.0Z" fill="#ababab" stroke="#ababab" stroke-width="0.6"/>
<path d="M1233.8,516.8 L1231.5,519.1 L1229.0,521.2 L1226.4,523.2 L1223.8,525.0 L1221.0,526.7 L1218.1,528.2 L1215.2,529.6 L1212.2,530.9 L1209.2,532.0 L1206.0,532.9 L1198.0,502.9 L1199.6,502.5 L1201.1,501.9 L1202.6,501.3 L1204.1,500.6 L1205.5,499.8 L1206.9,499.0 L1208.2,498.1 L1209.5,497.1 L1210.7,496.0 L1211.9,494.9Z" fill="#adadad" stroke="#adadad" stroke-width="0.6"/>
<path d="M1206.0,532.9 L1202.9,533.6 L1199.7,534.2 L1196.5,534.7 L1193.2,534.9 L1190.0,535.0 L1186.8,534.9 L1183.5,534.7 L1180.3,534.2 L1177.1,533.6 L1174.0,532.9 L1182.0,502.9 L1183.6,503.3 L1185.2,503.6 L1186.8,503.8 L1188.4,504.0 L1190.0,504.0 L1191.6,504.0 L1193.2,503.8 L1194.8,503.6 L1196.4,503.3 L1198.0,502.9Z" fill="#afafaf" stroke="#afafaf" stroke-width="0.6"/>
<path d="M1174.0,532.9 L1170.8,532.0 L1167.8,530.9 L1164.8,529.6 L1161.9,528.2 L1159.0,526.7 L1156.2,525.0 L1153.6,523.2 L1151.0,521.2 L1148.5,519.1 L1146.2,516.8 L1168.1,494.9 L1169.3,496.0 L1170.5,497.1 L1171.8,498.1 L1173.1,499.0 L1174.5,499.8 L1175.9,500.6 L1177.4,501.3 L1178.9,501.9 L1180.4,502.5 L1182.0,502.9Z" fill="#d8d8d8" stroke="#d8d8d8" stroke-width="0.6"/>
<path d="M1146.2,516.8 L1143.9,514.5 L1141.8,512.0 L1139.8,509.4 L1138.0,506.8 L1136.3,504.0 L1134.8,501.1 L1133.4,498.2 L1132.1,495.2 L1131.0,492.2 L1130.1,489.0 L1160.1,481.0 L1160.5,482.6 L1161.1,484.1 L1161.7,485.6 L1162.4,487.1 L1163.2,488.5 L1164.0,489.9 L1164.9,491.2 L1165.9,492.5 L1167.0,493.7 L1168.1,494.9Z" fill="#d6d6d6" stroke="#d6d6d6" stroke-width="0.6"/>
<path d="M1130.1,489.0 L1129.4,485.9 L1128.8,482.7 L1128.3,479.5 L1128.1,476.2 L1128.0,473.0 L1128.1,469.8 L1128.3,466.5 L1128.8,463.3 L1129.4,460.1 L1130.1,457.0 L1160.1,465.0 L1159.7,466.6 L1159.4,468.2 L1159.2,469.8 L1159.0,471.4 L1159.0,473.0 L1159.0,474.6 L1159.2,476.2 L1159.4,477.8 L1159.7,479.4 L1160.1,481.0Z" fill="#ececec" stroke="#ececec" stroke-width="0.6"/>
<path d="M1130.1,457.0 L1131.0,453.8 L1132.1,450.8 L1133.4,447.8 L1134.8,444.9 L1136.3,442.0 L1138.0,439.2 L1139.8,436.6 L1141.8,434.0 L1143.9,431.5 L1146.2,429.2 L1168.1,451.1 L1167.0,452.3 L1165.9,453.5 L1164.9,454.8 L1164.0,456.1 L1163.2,457.5 L1162.4,458.9 L1161.7,460.4 L1161.1,461.9 L1160.5,463.4 L1160.1,465.0Z" fill="#ececec" stroke="#ececec" stroke-width="0.6"/>
<path d="M1146.2,429.2 L1148.5,426.9 L1151.0,424.8 L1153.6,422.8 L1156.2,421.0 L1159.0,419.3 L1161.9,417.8 L1164.8,416.4 L1167.8,415.1 L1170.8,414.0 L1174.0,413.1 L1182.0,443.1 L1180.4,443.5 L1178.9,444.1 L1177.4,444.7 L1175.9,445.4 L1174.5,446.2 L1173.1,447.0 L1171.8,447.9 L1170.5,448.9 L1169.3,450.0 L1168.1,451.1Z" fill="#d8d8d8" stroke="#d8d8d8" stroke-width="0.6"/>
<path d="M1158.4,355.2 L1164.6,353.7 L1170.9,352.5 L1177.2,351.7 L1183.6,351.2 L1190.0,351.0 L1196.4,351.2 L1202.8,351.7 L1209.1,352.5 L1215.4,353.7 L1221.6,355.2 L1206.0,413.1 L1202.9,412.4 L1199.7,411.8 L1196.5,411.3 L1193.2,411.1 L1190.0,411.0 L1186.8,411.1 L1183.5,411.3 L1180.3,411.8 L1177.1,412.4 L1174.0,413.1Z" fill="#f2f2f2" stroke="#f2f2f2" stroke-width="0.6"/>
<path d="M1221.6,355.2 L1227.7,357.0 L1233.7,359.1 L1239.6,361.5 L1245.4,364.3 L1251.0,367.3 L1256.4,370.7 L1261.7,374.3 L1266.8,378.2 L1271.6,382.3 L1276.3,386.7 L1233.8,429.2 L1231.5,426.9 L1229.0,424.8 L1226.4,422.8 L1223.8,421.0 L1221.0,419.3 L1218.1,417.8 L1215.2,416.4 L1212.2,415.1 L1209.2,414.0 L1206.0,413.1Z" fill="#b0b0b0" stroke="#b0b0b0" stroke-width="0.6"/>
<path d="M1276.3,386.7 L1280.7,391.4 L1284.8,396.2 L1288.7,401.3 L1292.3,406.6 L1295.7,412.0 L1298.7,417.6 L1301.5,423.4 L1303.9,429.3 L1306.0,435.3 L1307.8,441.4 L1249.9,457.0 L1249.0,453.8 L1247.9,450.8 L1246.6,447.8 L1245.2,444.9 L1243.7,442.0 L1242.0,439.2 L1240.2,436.6 L1238.2,434.0 L1236.1,431.5 L1233.8,429.2Z" fill="#efefef" stroke="#efefef" stroke-width="0.6"/>
<path d="M1307.8,441.4 L1309.3,447.6 L1310.5,453.9 L1311.3,460.2 L1311.8,466.6 L1312.0,473.0 L1311.8,479.4 L1311.3,485.8 L1310.5,492.1 L1309.3,498.4 L1307.8,504.6 L1249.9,489.0 L1250.6,485.9 L1251.2,482.7 L1251.7,479.5 L1251.9,476.2 L1252.0,473.0 L1251.9,469.8 L1251.7,466.5 L1251.2,463.3 L1250.6,460.1 L1249.9,457.0Z" fill="#a0a0a0" stroke="#a0a0a0" stroke-width="0.6"/>
<path d="M1307.8,504.6 L1306.0,510.7 L1303.9,516.7 L1301.5,522.6 L1298.7,528.4 L1295.7,534.0 L1292.3,539.4 L1288.7,544.7 L1284.8,549.8 L1280.7,554.6 L1276.3,559.3 L1233.8,516.8 L1236.1,514.5 L1238.2,512.0 L1240.2,509.4 L1242.0,506.8 L1243.7,504.0 L1245.2,501.1 L1246.6,498.2 L1247.9,495.2 L1249.0,492.2 L1249.9,489.0Z" fill="#000000" stroke="#000000" stroke-width="0.6"/>
<path d="M1276.3,559.3 L1271.6,563.7 L1266.8,567.8 L1261.7,571.7 L1256.4,575.3 L1251.0,578.7 L1245.4,581.7 L1239.6,584.5 L1233.7,586.9 L1227.7,589.0 L1221.6,590.8 L1206.0,532.9 L1209.2,532.0 L1212.2,530.9 L1215.2,529.6 L1218.1,528.2 L1221.0,526.7 L1223.8,525.0 L1226.4,523.2 L1229.0,521.2 L1231.5,519.1 L1233.8,516.8Z" fill="#0d0d0d" stroke="#0d0d0d" stroke-width="0.6"/>
<path d="M1221.6,590.8 L1215.4,592.3 L1209.1,593.5 L1202.8,594.3 L1196.4,594.8 L1190.0,595.0 L1183.6,594.8 L1177.2,594.3 L1170.9,593.5 L1164.6,592.3 L1158.4,590.8 L1174.0,532.9 L1177.1,533.6 L1180.3,534.2 L1183.5,534.7 L1186.8,534.9 L1190.0,535.0 L1193.2,534.9 L1196.5,534.7 L1199.7,534.2 L1202.9,533.6 L1206.0,532.9Z" fill="#cacaca" stroke="#cacaca" stroke-width="0.6"/>
<path d="M1158.4,590.8 L1152.3,589.0 L1146.3,586.9 L1140.4,584.5 L1134.6,581.7 L1129.0,578.7 L1123.6,575.3 L1118.3,571.7 L1113.2,567.8 L1108.4,563.7 L1103.7,559.3 L1146.2,516.8 L1148.5,519.1 L1151.0,521.2 L1153.6,523.2 L1156.2,525.0 L1159.0,526.7 L1161.9,528.2 L1164.8,529.6 L1167.8,530.9 L1170.8,532.0 L1174.0,532.9Z" fill="#e5e5e5" stroke="#e5e5e5" stroke-width="0.6"/>
<path d="M1103.7,559.3 L1099.3,554.6 L1095.2,549.8 L1091.3,544.7 L1087.7,539.4 L1084.3,534.0 L1081.3,528.4 L1078.5,522.6 L1076.1,516.7 L1074.0,510.7 L1072.2,504.6 L1130.1,489.0 L1131.0,492.2 L1132.1,495.2 L1133.4,498.2 L1134.8,501.1 L1136.3,504.0 L1138.0,506.8 L1139.8,509.4 L1141.8,512.0 L1143.9,514.5 L1146.2,516.8Z" fill="#dedede" stroke="#dedede" stroke-width="0.6"/>
<path d="M1072.2,504.6 L1070.7,498.4 L1069.5,492.1 L1068.7,485.8 L1068.2,479.4 L1068.0,473.0 L1068.2,466.6 L1068.7,460.2 L1069.5,453.9 L1070.7,447.6 L1072.2,441.4 L1130.1,457.0 L1129.4,460.1 L1128.8,463.3 L1128.3,466.5 L1128.1,469.8 L1128.0,473.0 L1128.1,476.2 L1128.3,479.5 L1128.8,482.7 L1129.4,485.9 L1130.1,489.0Z" fill="#dcdcdc" stroke="#dcdcdc" stroke-width="0.6"/>
<path d="M1072.2,441.4 L1074.0,435.3 L1076.1,429.3 L1078.5,423.4 L1081.3,417.6 L1084.3,412.0 L1087.7,406.6 L1091.3,401.3 L1095.2,396.2 L1099.3,391.4 L1103.7,386.7 L1146.2,429.2 L1143.9,431.5 L1141.8,434.0 L1139.8,436.6 L1138.0,439.2 L1136.3,442.0 L1134.8,444.9 L1133.4,447.8 L1132.1,450.8 L1131.0,453.8 L1130.1,457.0Z" fill="#d6d6d6" stroke="#d6d6d6" stroke-width="0.6"/>
<path d="M1103.7,386.7 L1108.4,382.3 L1113.2,378.2 L1118.3,374.3 L1123.6,370.7 L1129.0,367.3 L1134.6,364.3 L1140.4,361.5 L1146.3,359.1 L1152.3,357.0 L1158.4,355.2 L1174.0,413.1 L1170.8,414.0 L1167.8,415.1 L1164.8,416.4 L1161.9,417.8 L1159.0,419.3 L1156.2,421.0 L1153.6,422.8 L1151.0,424.8 L1148.5,426.9 L1146.2,429.2Z" fill="#f7f7f7" stroke="#f7f7f7" stroke-width="0.6"/>
<text x="1036.3" y="353.3" text-anchor="end" font-size="12.5" fill="#404040">-10</text>
<text x="1036.3" y="415.3" text-anchor="end" font-size="12.5" fill="#404040">-5</text>
<text x="1036.3" y="477.3" text-anchor="end" font-size="12.5" fill="#404040">0</text>
<text x="1036.3" y="539.3" text-anchor="end" font-size="12.5" fill="#404040">5</text>
<text x="1036.3" y="601.3" text-anchor="end" font-size="12.5" fill="#404040">10</text>
<text x="1066.0" y="614.0" text-anchor="middle" font-size="12.5" fill="#404040">-10</text>
<text x="1128.0" y="614.0" text-anchor="middle" font-size="12.5" fill="#404040">-5</text>
<text x="1190.0" y="614.0" text-anchor="middle" font-size="12.5" fill="#404040">0</text>
<text x="1252.0" y="614.0" text-anchor="middle" font-size="12.5" fill="#404040">5</text>
<text x="1314.0" y="614.0" text-anchor="middle" font-size="12.5" fill="#404040">10</text>
<text x="1190" y="345" text-anchor="middle" font-size="13.8" font-weight="bold" fill="#111">Roughness Patches Close to the Site</text>
<rect x="1349.9" y="349.9" width="21" height="246.5" fill="url(#cb1)" stroke="#0000c8" stroke-width="1.3"/>
<text x="1342.5" y="351.5" text-anchor="end" font-size="11.2" fill="#3636c4" style="white-space:pre">z<tspan font-size="7.6" dy="2.5">o</tspan><tspan dy="-2.5">=1  m</tspan></text>
<text x="1342.5" y="417.0" text-anchor="end" font-size="11.2" fill="#3636c4" style="white-space:pre">z<tspan font-size="7.6" dy="2.5">o</tspan><tspan dy="-2.5">=0.3  m</tspan></text>
<line x1="1350" y1="412.7" x2="1353" y2="412.7" stroke="#0000c8"/>
<text x="1342.5" y="475.7" text-anchor="end" font-size="11.2" fill="#3636c4" style="white-space:pre">z<tspan font-size="7.6" dy="2.5">o</tspan><tspan dy="-2.5">=0.1  m</tspan></text>
<line x1="1350" y1="471.4" x2="1353" y2="471.4" stroke="#0000c8"/>
<text x="1342.5" y="541.0" text-anchor="end" font-size="11.2" fill="#3636c4" style="white-space:pre">z<tspan font-size="7.6" dy="2.5">o</tspan><tspan dy="-2.5">=0.03  m</tspan></text>
<line x1="1350" y1="536.7" x2="1353" y2="536.7" stroke="#0000c8"/>
<text x="1342.5" y="600.4" text-anchor="end" font-size="11.2" fill="#3636c4" style="white-space:pre">z<tspan font-size="7.6" dy="2.5">o</tspan><tspan dy="-2.5">=0.01  m</tspan></text>
<rect x="682.5" y="660" width="318.1" height="264.0" fill="#fff"/>
<path d="M682.5,660 L682.5,924 L1000.6,924" stroke="#c6c6c6" fill="none"/>
<circle cx="842" cy="792" r="132" fill="#454d3a"/>
<circle cx="842" cy="792" r="132" fill="#000" filter="url(#texF)"/>
<circle cx="842" cy="792" r="132" fill="#000" filter="url(#texG2)"/>
<polygon points="851.7,791.9 856.6,787.0 866.4,781.7 881.0,772.4 895.7,762.6 907.9,754.0 925.0,747.4 949.5,745.0 967.1,743.5 965.1,744.3 966.2,747.4 967.3,750.6 968.3,753.7 969.3,757.0 970.1,760.2 970.9,763.4 971.6,766.7 972.1,770.0 972.7,773.3 973.1,776.6 973.4,779.9 973.7,783.2 973.9,786.5 974.0,789.9 974.0,793.2 973.9,796.5 973.8,799.9 973.5,803.2 973.2,806.5 972.8,809.8 972.3,813.1 971.7,816.4 971.1,819.7 970.3,822.9 971.5,823.2 949.5,826.1 925.0,831.5 900.6,840.8 876.1,846.2 856.6,845.2 841.9,841.3 827.2,838.9 819.4,836.4 827.2,826.1 839.5,811.5 849.3,801.7" fill="#4f5b9c"/>
<polygon points="783.2,908.1 810.1,900.0 839.5,897.1 863.9,898.5 888.4,897.1 917.7,890.2 926.3,888.5 928.8,891.4 923.8,895.6 918.6,899.5 913.2,903.2 907.6,906.5 901.9,909.6 896.0,912.5 890.0,915.0 883.8,917.2 877.6,919.1 871.3,920.7 864.9,922.0 858.4,923.0 851.9,923.6 845.4,924.0 838.9,924.0 832.4,923.6 825.9,923.0 819.4,922.1 813.0,920.8 806.7,919.2 800.4,917.3 794.3,915.1 788.3,912.6 782.4,909.8" fill="#4f5b9c"/>
<polygon points="852.2,660.4 874.7,661.1 872.2,669.2 863.4,672.4 856.1,678.0 853.2,672.4" fill="#1b2833"/>
<line x1="845.4" y1="779.4" x2="852.4" y2="753.4" stroke="#fff" stroke-opacity="0.8" stroke-width="0.9"/>
<line x1="852.4" y1="753.4" x2="876.2" y2="664.5" stroke="#fff" stroke-width="2"/>
<line x1="851.2" y1="782.8" x2="870.3" y2="763.7" stroke="#fff" stroke-opacity="0.8" stroke-width="0.9"/>
<line x1="870.3" y1="763.7" x2="935.3" y2="698.7" stroke="#fff" stroke-width="2"/>
<line x1="854.6" y1="788.6" x2="880.6" y2="781.6" stroke="#fff" stroke-opacity="0.8" stroke-width="0.9"/>
<line x1="880.6" y1="781.6" x2="969.5" y2="757.8" stroke="#fff" stroke-width="2"/>
<line x1="854.6" y1="795.4" x2="880.6" y2="802.4" stroke="#fff" stroke-opacity="0.8" stroke-width="0.9"/>
<line x1="880.6" y1="802.4" x2="969.5" y2="826.2" stroke="#fff" stroke-width="2"/>
<line x1="851.2" y1="801.2" x2="870.3" y2="820.3" stroke="#fff" stroke-opacity="0.8" stroke-width="0.9"/>
<line x1="870.3" y1="820.3" x2="935.3" y2="885.3" stroke="#fff" stroke-width="2"/>
<line x1="845.4" y1="804.6" x2="852.4" y2="830.6" stroke="#fff" stroke-opacity="0.8" stroke-width="0.9"/>
<line x1="852.4" y1="830.6" x2="876.2" y2="919.5" stroke="#fff" stroke-width="2"/>
<line x1="838.6" y1="804.6" x2="831.6" y2="830.6" stroke="#fff" stroke-opacity="0.8" stroke-width="0.9"/>
<line x1="831.6" y1="830.6" x2="807.8" y2="919.5" stroke="#fff" stroke-width="2"/>
<line x1="832.8" y1="801.2" x2="813.7" y2="820.3" stroke="#fff" stroke-opacity="0.8" stroke-width="0.9"/>
<line x1="813.7" y1="820.3" x2="748.7" y2="885.3" stroke="#fff" stroke-width="2"/>
<line x1="829.4" y1="795.4" x2="803.4" y2="802.4" stroke="#fff" stroke-opacity="0.8" stroke-width="0.9"/>
<line x1="803.4" y1="802.4" x2="714.5" y2="826.2" stroke="#fff" stroke-width="2"/>
<line x1="829.4" y1="788.6" x2="803.4" y2="781.6" stroke="#fff" stroke-opacity="0.8" stroke-width="0.9"/>
<line x1="803.4" y1="781.6" x2="714.5" y2="757.8" stroke="#fff" stroke-width="2"/>
<line x1="832.8" y1="782.8" x2="813.7" y2="763.7" stroke="#fff" stroke-opacity="0.8" stroke-width="0.9"/>
<line x1="813.7" y1="763.7" x2="748.7" y2="698.7" stroke="#fff" stroke-width="2"/>
<line x1="838.6" y1="779.4" x2="831.6" y2="753.4" stroke="#fff" stroke-opacity="0.8" stroke-width="0.9"/>
<line x1="831.6" y1="753.4" x2="807.8" y2="664.5" stroke="#fff" stroke-width="2"/>
<g clip-path="url(#ax3)" font-size="9" fill="#f6f6f6" stroke="#f6f6f6" stroke-width="0.3">
<circle cx="842.0" cy="766.8" r="1.7" fill="#e8232a"/><text x="843.4" y="770.1">0.133</text>
<circle cx="854.6" cy="770.2" r="1.7" fill="#e8232a"/><text x="856.0" y="773.5">0.091</text>
<circle cx="863.8" cy="779.4" r="1.7" fill="#e8232a"/><text x="865.2" y="782.7">0.094</text>
<circle cx="867.2" cy="792.0" r="1.7" fill="#e8232a"/><text x="868.6" y="795.3">0.008</text>
<circle cx="863.8" cy="804.6" r="1.7" fill="#e8232a"/><text x="865.2" y="807.9">0.019</text>
<circle cx="854.6" cy="813.8" r="1.7" fill="#e8232a"/><text x="856.0" y="817.1">0.064</text>
<circle cx="842.0" cy="817.2" r="1.7" fill="#e8232a"/><text x="843.4" y="820.5">0.041</text>
<circle cx="829.4" cy="813.8" r="1.7" fill="#e8232a"/><text x="830.8" y="817.1">0.080</text>
<circle cx="820.2" cy="804.6" r="1.7" fill="#e8232a"/><text x="821.6" y="807.9">0.133</text>
<circle cx="816.8" cy="792.0" r="1.7" fill="#e8232a"/><text x="818.2" y="795.3">0.117</text>
<circle cx="820.2" cy="779.4" r="1.7" fill="#e8232a"/><text x="821.6" y="782.7">0.060</text>
<circle cx="829.4" cy="770.2" r="1.7" fill="#e8232a"/><text x="830.8" y="773.5">0.087</text>
<circle cx="842.0" cy="743.0" r="1.7" fill="#e8232a"/><text x="843.4" y="746.3">0.059</text>
<circle cx="866.5" cy="749.6" r="1.7" fill="#e8232a"/><text x="867.9" y="752.9">0.085</text>
<circle cx="884.4" cy="767.5" r="1.7" fill="#e8232a"/><text x="885.8" y="770.8">0.058</text>
<circle cx="891.0" cy="792.0" r="1.7" fill="#e8232a"/><text x="892.4" y="795.3">0.036</text>
<circle cx="884.4" cy="816.5" r="1.7" fill="#e8232a"/><text x="885.8" y="819.8">0.005</text>
<circle cx="866.5" cy="834.4" r="1.7" fill="#e8232a"/><text x="867.9" y="837.7">0.015</text>
<circle cx="842.0" cy="841.0" r="1.7" fill="#e8232a"/><text x="843.4" y="844.3">0.006</text>
<circle cx="817.5" cy="834.4" r="1.7" fill="#e8232a"/><text x="818.9" y="837.7">0.063</text>
<circle cx="799.6" cy="816.5" r="1.7" fill="#e8232a"/><text x="801.0" y="819.8">0.041</text>
<circle cx="793.0" cy="792.0" r="1.7" fill="#e8232a"/><text x="794.4" y="795.3">0.041</text>
<circle cx="799.6" cy="767.5" r="1.7" fill="#e8232a"/><text x="801.0" y="770.8">0.043</text>
<circle cx="817.5" cy="749.6" r="1.7" fill="#e8232a"/><text x="818.9" y="752.9">0.043</text>
<circle cx="842.0" cy="719.2" r="1.7" fill="#e8232a"/><text x="843.4" y="722.5">0.053</text>
<circle cx="878.4" cy="728.9" r="1.7" fill="#e8232a"/><text x="879.8" y="732.2">0.051</text>
<circle cx="905.1" cy="755.6" r="1.7" fill="#e8232a"/><text x="906.5" y="758.9">0.027</text>
<circle cx="914.8" cy="792.0" r="1.7" fill="#e8232a"/><text x="916.2" y="795.3">0.006</text>
<circle cx="905.1" cy="828.4" r="1.7" fill="#e8232a"/><text x="906.5" y="831.7">0.010</text>
<circle cx="878.4" cy="855.1" r="1.7" fill="#e8232a"/><text x="879.8" y="858.4">0.034</text>
<circle cx="842.0" cy="864.8" r="1.7" fill="#e8232a"/><text x="843.4" y="868.1">0.075</text>
<circle cx="805.6" cy="855.1" r="1.7" fill="#e8232a"/><text x="807.0" y="858.4">0.108</text>
<circle cx="778.9" cy="828.4" r="1.7" fill="#e8232a"/><text x="780.3" y="831.7">0.053</text>
<circle cx="769.2" cy="792.0" r="1.7" fill="#e8232a"/><text x="770.6" y="795.3">0.045</text>
<circle cx="778.9" cy="755.6" r="1.7" fill="#e8232a"/><text x="780.3" y="758.9">0.041</text>
<circle cx="805.6" cy="728.9" r="1.7" fill="#e8232a"/><text x="807.0" y="732.2">0.037</text>
<circle cx="842.0" cy="695.3" r="1.7" fill="#e8232a"/><text x="843.4" y="698.6">0.060</text>
<circle cx="890.3" cy="708.3" r="1.7" fill="#e8232a"/><text x="891.7" y="711.6">0.041</text>
<circle cx="925.7" cy="743.7" r="1.7" fill="#e8232a"/><text x="927.1" y="747.0">0.033</text>
<circle cx="938.7" cy="792.0" r="1.7" fill="#e8232a"/><text x="940.1" y="795.3">0.004</text>
<circle cx="925.7" cy="840.3" r="1.7" fill="#e8232a"/><text x="927.1" y="843.6">0.029</text>
<circle cx="890.3" cy="875.7" r="1.7" fill="#e8232a"/><text x="891.7" y="879.0">0.046</text>
<circle cx="842.0" cy="888.7" r="1.7" fill="#e8232a"/><text x="843.4" y="892.0">0.049</text>
<circle cx="793.7" cy="875.7" r="1.7" fill="#e8232a"/><text x="795.1" y="879.0">0.076</text>
<circle cx="758.3" cy="840.3" r="1.7" fill="#e8232a"/><text x="759.7" y="843.6">0.071</text>
<circle cx="745.3" cy="792.0" r="1.7" fill="#e8232a"/><text x="746.7" y="795.3">0.038</text>
<circle cx="758.3" cy="743.7" r="1.7" fill="#e8232a"/><text x="759.7" y="747.0">0.043</text>
<circle cx="793.7" cy="708.3" r="1.7" fill="#e8232a"/><text x="795.1" y="711.6">0.041</text>
<circle cx="842.0" cy="671.5" r="1.7" fill="#e8232a"/><text x="843.4" y="674.8">0.054</text>
<circle cx="902.3" cy="687.6" r="1.7" fill="#e8232a"/><text x="903.7" y="690.9">0.044</text>
<circle cx="946.4" cy="731.7" r="1.7" fill="#e8232a"/><text x="947.8" y="735.0">0.040</text>
<circle cx="962.5" cy="792.0" r="1.7" fill="#e8232a"/><text x="963.9" y="795.3">0.004</text>
<circle cx="946.4" cy="852.3" r="1.7" fill="#e8232a"/><text x="947.8" y="855.6">0.031</text>
<circle cx="902.3" cy="896.4" r="1.7" fill="#e8232a"/><text x="903.7" y="899.7">0.024</text>
<circle cx="842.0" cy="912.5" r="1.7" fill="#e8232a"/><text x="843.4" y="915.8">0.004</text>
<circle cx="781.7" cy="896.4" r="1.7" fill="#e8232a"/><text x="783.1" y="899.7">0.101</text>
<circle cx="737.6" cy="852.3" r="1.7" fill="#e8232a"/><text x="739.0" y="855.6">0.069</text>
<circle cx="721.5" cy="792.0" r="1.7" fill="#e8232a"/><text x="722.9" y="795.3">0.043</text>
<circle cx="737.6" cy="731.7" r="1.7" fill="#e8232a"/><text x="739.0" y="735.0">0.032</text>
<circle cx="781.7" cy="687.6" r="1.7" fill="#e8232a"/><text x="783.1" y="690.9">0.045</text>
</g>
<circle cx="842" cy="792" r="13.4" fill="#fff"/>
<text x="678.6" y="664.6" text-anchor="end" font-size="12.5" fill="#404040">-100</text>
<text x="678.6" y="730.6" text-anchor="end" font-size="12.5" fill="#404040">-50</text>
<text x="678.6" y="796.6" text-anchor="end" font-size="12.5" fill="#404040">0</text>
<text x="678.6" y="862.6" text-anchor="end" font-size="12.5" fill="#404040">50</text>
<text x="678.6" y="928.6" text-anchor="end" font-size="12.5" fill="#404040">100</text>
<text x="709.6" y="940.8" text-anchor="middle" font-size="12.5" fill="#404040">-100</text>
<text x="775.8" y="940.8" text-anchor="middle" font-size="12.5" fill="#404040">-50</text>
<text x="842.0" y="940.8" text-anchor="middle" font-size="12.5" fill="#404040">0</text>
<text x="908.2" y="940.8" text-anchor="middle" font-size="12.5" fill="#404040">50</text>
<text x="974.4" y="940.8" text-anchor="middle" font-size="12.5" fill="#404040">100</text>
<text x="842" y="957.5" text-anchor="middle" font-size="13.8" fill="#404040">km</text>
<text transform="translate(647.5,792) rotate(-90)" text-anchor="middle" font-size="13.8" fill="#404040">km</text>
<text x="842" y="654.7" text-anchor="middle" font-size="13.8" font-weight="bold" fill="#111">Sattelite Map Far from the Site</text>
<rect x="1049" y="679.3" width="289.6" height="241.5" fill="#fff"/>
<path d="M1049,679.3 L1049,920.8 L1338.6,920.8" stroke="#c6c6c6" fill="none"/>
<path d="M1184.8,767.4 L1186.5,766.9 L1188.2,766.6 L1190.0,766.4 L1191.7,766.2 L1193.5,766.2 L1195.3,766.2 L1197.0,766.4 L1198.8,766.6 L1200.5,766.9 L1202.2,767.4 L1196.6,788.3 L1196.0,788.2 L1195.4,788.0 L1194.8,788.0 L1194.1,787.9 L1193.5,787.9 L1192.9,787.9 L1192.2,788.0 L1191.6,788.0 L1191.0,788.2 L1190.4,788.3Z" fill="#ffffff" stroke="#ffffff" stroke-width="0.6"/>
<path d="M1179.1,746.3 L1181.9,745.6 L1184.8,745.1 L1187.7,744.7 L1190.6,744.5 L1193.5,744.4 L1196.4,744.5 L1199.3,744.7 L1202.2,745.1 L1205.1,745.6 L1207.9,746.3 L1202.2,767.4 L1200.5,766.9 L1198.8,766.6 L1197.0,766.4 L1195.3,766.2 L1193.5,766.2 L1191.7,766.2 L1190.0,766.4 L1188.2,766.6 L1186.5,766.9 L1184.8,767.4Z" fill="#bebebe" stroke="#bebebe" stroke-width="0.6"/>
<path d="M1173.5,725.3 L1177.4,724.4 L1181.4,723.7 L1185.4,723.1 L1189.5,722.8 L1193.5,722.7 L1197.5,722.8 L1201.6,723.1 L1205.6,723.7 L1209.6,724.4 L1213.5,725.3 L1207.9,746.3 L1205.1,745.6 L1202.2,745.1 L1199.3,744.7 L1196.4,744.5 L1193.5,744.4 L1190.6,744.5 L1187.7,744.7 L1184.8,745.1 L1181.9,745.6 L1179.1,746.3Z" fill="#b8b8b8" stroke="#b8b8b8" stroke-width="0.6"/>
<path d="M1167.9,704.4 L1172.9,703.2 L1178.0,702.2 L1183.2,701.5 L1188.3,701.1 L1193.5,701.0 L1198.7,701.1 L1203.8,701.5 L1209.0,702.2 L1214.1,703.2 L1219.1,704.4 L1213.5,725.3 L1209.6,724.4 L1205.6,723.7 L1201.6,723.1 L1197.5,722.8 L1193.5,722.7 L1189.5,722.8 L1185.4,723.1 L1181.4,723.7 L1177.4,724.4 L1173.5,725.3Z" fill="#c2c2c2" stroke="#c2c2c2" stroke-width="0.6"/>
<path d="M1162.2,683.3 L1168.4,681.8 L1174.6,680.7 L1180.9,679.9 L1187.2,679.4 L1193.5,679.2 L1199.8,679.4 L1206.1,679.9 L1212.4,680.7 L1218.6,681.8 L1224.8,683.3 L1219.1,704.4 L1214.1,703.2 L1209.0,702.2 L1203.8,701.5 L1198.7,701.1 L1193.5,701.0 L1188.3,701.1 L1183.2,701.5 L1178.0,702.2 L1172.9,703.2 L1167.9,704.4Z" fill="#b9b9b9" stroke="#b9b9b9" stroke-width="0.6"/>
<path d="M1202.2,767.4 L1203.9,767.9 L1205.6,768.4 L1207.2,769.1 L1208.8,769.9 L1210.4,770.7 L1211.9,771.7 L1213.4,772.7 L1214.8,773.7 L1216.1,774.9 L1217.4,776.1 L1202.1,791.4 L1201.6,791.0 L1201.1,790.6 L1200.6,790.2 L1200.1,789.9 L1199.5,789.5 L1199.0,789.2 L1198.4,788.9 L1197.8,788.7 L1197.2,788.5 L1196.6,788.3Z" fill="#f0f0f0" stroke="#f0f0f0" stroke-width="0.6"/>
<path d="M1207.9,746.3 L1210.7,747.1 L1213.4,748.1 L1216.1,749.2 L1218.7,750.5 L1221.3,751.8 L1223.8,753.4 L1226.2,755.0 L1228.5,756.8 L1230.7,758.7 L1232.8,760.7 L1217.4,776.1 L1216.1,774.9 L1214.8,773.7 L1213.4,772.7 L1211.9,771.7 L1210.4,770.7 L1208.8,769.9 L1207.2,769.1 L1205.6,768.4 L1203.9,767.9 L1202.2,767.4Z" fill="#e5e5e5" stroke="#e5e5e5" stroke-width="0.6"/>
<path d="M1213.5,725.3 L1217.4,726.5 L1221.2,727.8 L1224.9,729.4 L1228.6,731.1 L1232.2,733.1 L1235.6,735.2 L1238.9,737.5 L1242.1,739.9 L1245.2,742.6 L1248.2,745.3 L1232.8,760.7 L1230.7,758.7 L1228.5,756.8 L1226.2,755.0 L1223.8,753.4 L1221.3,751.8 L1218.7,750.5 L1216.1,749.2 L1213.4,748.1 L1210.7,747.1 L1207.9,746.3Z" fill="#b5b5b5" stroke="#b5b5b5" stroke-width="0.6"/>
<path d="M1219.1,704.4 L1224.1,705.8 L1229.0,707.6 L1233.8,709.6 L1238.4,711.8 L1243.0,714.3 L1247.4,717.0 L1251.7,719.9 L1255.8,723.1 L1259.7,726.4 L1263.5,730.0 L1248.2,745.3 L1245.2,742.6 L1242.1,739.9 L1238.9,737.5 L1235.6,735.2 L1232.2,733.1 L1228.6,731.1 L1224.9,729.4 L1221.2,727.8 L1217.4,726.5 L1213.5,725.3Z" fill="#ababab" stroke="#ababab" stroke-width="0.6"/>
<path d="M1224.8,683.3 L1230.8,685.1 L1236.8,687.2 L1242.6,689.6 L1248.3,692.4 L1253.9,695.4 L1259.3,698.7 L1264.5,702.3 L1269.5,706.1 L1274.3,710.2 L1278.9,714.6 L1263.5,730.0 L1259.7,726.4 L1255.8,723.1 L1251.7,719.9 L1247.4,717.0 L1243.0,714.3 L1238.4,711.8 L1233.8,709.6 L1229.0,707.6 L1224.1,705.8 L1219.1,704.4Z" fill="#acacac" stroke="#acacac" stroke-width="0.6"/>
<path d="M1217.4,776.1 L1218.6,777.4 L1219.8,778.7 L1220.8,780.1 L1221.8,781.6 L1222.8,783.1 L1223.6,784.7 L1224.4,786.3 L1225.1,787.9 L1225.6,789.6 L1226.1,791.3 L1205.2,796.9 L1205.0,796.3 L1204.8,795.7 L1204.6,795.1 L1204.3,794.5 L1204.0,794.0 L1203.6,793.4 L1203.3,792.9 L1202.9,792.4 L1202.5,791.9 L1202.1,791.4Z" fill="#e0e0e0" stroke="#e0e0e0" stroke-width="0.6"/>
<path d="M1232.8,760.7 L1234.8,762.8 L1236.7,765.0 L1238.5,767.3 L1240.1,769.7 L1241.7,772.2 L1243.0,774.8 L1244.3,777.4 L1245.4,780.1 L1246.4,782.8 L1247.2,785.6 L1226.1,791.3 L1225.6,789.6 L1225.1,787.9 L1224.4,786.3 L1223.6,784.7 L1222.8,783.1 L1221.8,781.6 L1220.8,780.1 L1219.8,778.7 L1218.6,777.4 L1217.4,776.1Z" fill="#cfcfcf" stroke="#cfcfcf" stroke-width="0.6"/>
<path d="M1248.2,745.3 L1250.9,748.3 L1253.6,751.4 L1256.0,754.6 L1258.3,757.9 L1260.4,761.4 L1262.4,764.9 L1264.1,768.6 L1265.7,772.3 L1267.0,776.1 L1268.2,780.0 L1247.2,785.6 L1246.4,782.8 L1245.4,780.1 L1244.3,777.4 L1243.0,774.8 L1241.7,772.2 L1240.1,769.7 L1238.5,767.3 L1236.7,765.0 L1234.8,762.8 L1232.8,760.7Z" fill="#707070" stroke="#707070" stroke-width="0.6"/>
<path d="M1263.5,730.0 L1267.1,733.8 L1270.4,737.7 L1273.6,741.8 L1276.5,746.1 L1279.2,750.5 L1281.7,755.1 L1283.9,759.7 L1285.9,764.5 L1287.7,769.4 L1289.1,774.4 L1268.2,780.0 L1267.0,776.1 L1265.7,772.3 L1264.1,768.6 L1262.4,764.9 L1260.4,761.4 L1258.3,757.9 L1256.0,754.6 L1253.6,751.4 L1250.9,748.3 L1248.2,745.3Z" fill="#909090" stroke="#909090" stroke-width="0.6"/>
<path d="M1278.9,714.6 L1283.3,719.2 L1287.4,724.0 L1291.2,729.0 L1294.8,734.2 L1298.1,739.6 L1301.1,745.2 L1303.9,750.9 L1306.3,756.7 L1308.4,762.7 L1310.2,768.7 L1289.1,774.4 L1287.7,769.4 L1285.9,764.5 L1283.9,759.7 L1281.7,755.1 L1279.2,750.5 L1276.5,746.1 L1273.6,741.8 L1270.4,737.7 L1267.1,733.8 L1263.5,730.0Z" fill="#a8a8a8" stroke="#a8a8a8" stroke-width="0.6"/>
<path d="M1226.1,791.3 L1226.6,793.0 L1226.9,794.7 L1227.1,796.5 L1227.3,798.2 L1227.3,800.0 L1227.3,801.8 L1227.1,803.5 L1226.9,805.3 L1226.6,807.0 L1226.1,808.7 L1205.2,803.1 L1205.3,802.5 L1205.5,801.9 L1205.5,801.3 L1205.6,800.6 L1205.6,800.0 L1205.6,799.4 L1205.5,798.7 L1205.5,798.1 L1205.3,797.5 L1205.2,796.9Z" fill="#333333" stroke="#333333" stroke-width="0.6"/>
<path d="M1247.2,785.6 L1247.9,788.4 L1248.4,791.3 L1248.8,794.2 L1249.0,797.1 L1249.1,800.0 L1249.0,802.9 L1248.8,805.8 L1248.4,808.7 L1247.9,811.6 L1247.2,814.4 L1226.1,808.7 L1226.6,807.0 L1226.9,805.3 L1227.1,803.5 L1227.3,801.8 L1227.3,800.0 L1227.3,798.2 L1227.1,796.5 L1226.9,794.7 L1226.6,793.0 L1226.1,791.3Z" fill="#9e9e9e" stroke="#9e9e9e" stroke-width="0.6"/>
<path d="M1268.2,780.0 L1269.1,783.9 L1269.8,787.9 L1270.4,791.9 L1270.7,796.0 L1270.8,800.0 L1270.7,804.0 L1270.4,808.1 L1269.8,812.1 L1269.1,816.1 L1268.2,820.0 L1247.2,814.4 L1247.9,811.6 L1248.4,808.7 L1248.8,805.8 L1249.0,802.9 L1249.1,800.0 L1249.0,797.1 L1248.8,794.2 L1248.4,791.3 L1247.9,788.4 L1247.2,785.6Z" fill="#1c1c1c" stroke="#1c1c1c" stroke-width="0.6"/>
<path d="M1289.1,774.4 L1290.3,779.4 L1291.3,784.5 L1292.0,789.7 L1292.4,794.8 L1292.5,800.0 L1292.4,805.2 L1292.0,810.3 L1291.3,815.5 L1290.3,820.6 L1289.1,825.6 L1268.2,820.0 L1269.1,816.1 L1269.8,812.1 L1270.4,808.1 L1270.7,804.0 L1270.8,800.0 L1270.7,796.0 L1270.4,791.9 L1269.8,787.9 L1269.1,783.9 L1268.2,780.0Z" fill="#000000" stroke="#000000" stroke-width="0.6"/>
<path d="M1310.2,768.7 L1311.7,774.9 L1312.8,781.1 L1313.6,787.4 L1314.1,793.7 L1314.3,800.0 L1314.1,806.3 L1313.6,812.6 L1312.8,818.9 L1311.7,825.1 L1310.2,831.3 L1289.1,825.6 L1290.3,820.6 L1291.3,815.5 L1292.0,810.3 L1292.4,805.2 L1292.5,800.0 L1292.4,794.8 L1292.0,789.7 L1291.3,784.5 L1290.3,779.4 L1289.1,774.4Z" fill="#000000" stroke="#000000" stroke-width="0.6"/>
<path d="M1226.1,808.7 L1225.6,810.4 L1225.1,812.1 L1224.4,813.7 L1223.6,815.3 L1222.8,816.9 L1221.8,818.4 L1220.8,819.9 L1219.8,821.3 L1218.6,822.6 L1217.4,823.9 L1202.1,808.6 L1202.5,808.1 L1202.9,807.6 L1203.3,807.1 L1203.6,806.6 L1204.0,806.0 L1204.3,805.5 L1204.6,804.9 L1204.8,804.3 L1205.0,803.7 L1205.2,803.1Z" fill="#7a7a7a" stroke="#7a7a7a" stroke-width="0.6"/>
<path d="M1247.2,814.4 L1246.4,817.2 L1245.4,819.9 L1244.3,822.6 L1243.0,825.2 L1241.7,827.8 L1240.1,830.3 L1238.5,832.7 L1236.7,835.0 L1234.8,837.2 L1232.8,839.3 L1217.4,823.9 L1218.6,822.6 L1219.8,821.3 L1220.8,819.9 L1221.8,818.4 L1222.8,816.9 L1223.6,815.3 L1224.4,813.7 L1225.1,812.1 L1225.6,810.4 L1226.1,808.7Z" fill="#0a0a0a" stroke="#0a0a0a" stroke-width="0.6"/>
<path d="M1268.2,820.0 L1267.0,823.9 L1265.7,827.7 L1264.1,831.4 L1262.4,835.1 L1260.4,838.6 L1258.3,842.1 L1256.0,845.4 L1253.6,848.6 L1250.9,851.7 L1248.2,854.7 L1232.8,839.3 L1234.8,837.2 L1236.7,835.0 L1238.5,832.7 L1240.1,830.3 L1241.7,827.8 L1243.0,825.2 L1244.3,822.6 L1245.4,819.9 L1246.4,817.2 L1247.2,814.4Z" fill="#3c3c3c" stroke="#3c3c3c" stroke-width="0.6"/>
<path d="M1289.1,825.6 L1287.7,830.6 L1285.9,835.5 L1283.9,840.3 L1281.7,844.9 L1279.2,849.5 L1276.5,853.9 L1273.6,858.2 L1270.4,862.3 L1267.1,866.2 L1263.5,870.0 L1248.2,854.7 L1250.9,851.7 L1253.6,848.6 L1256.0,845.4 L1258.3,842.1 L1260.4,838.6 L1262.4,835.1 L1264.1,831.4 L1265.7,827.7 L1267.0,823.9 L1268.2,820.0Z" fill="#8a8a8a" stroke="#8a8a8a" stroke-width="0.6"/>
<path d="M1310.2,831.3 L1308.4,837.3 L1306.3,843.3 L1303.9,849.1 L1301.1,854.8 L1298.1,860.4 L1294.8,865.8 L1291.2,871.0 L1287.4,876.0 L1283.3,880.8 L1278.9,885.4 L1263.5,870.0 L1267.1,866.2 L1270.4,862.3 L1273.6,858.2 L1276.5,853.9 L1279.2,849.5 L1281.7,844.9 L1283.9,840.3 L1285.9,835.5 L1287.7,830.6 L1289.1,825.6Z" fill="#a0a0a0" stroke="#a0a0a0" stroke-width="0.6"/>
<path d="M1217.4,823.9 L1216.1,825.1 L1214.8,826.3 L1213.4,827.3 L1211.9,828.3 L1210.4,829.3 L1208.8,830.1 L1207.2,830.9 L1205.6,831.6 L1203.9,832.1 L1202.2,832.6 L1196.6,811.7 L1197.2,811.5 L1197.8,811.3 L1198.4,811.1 L1199.0,810.8 L1199.5,810.5 L1200.1,810.1 L1200.6,809.8 L1201.1,809.4 L1201.6,809.0 L1202.1,808.6Z" fill="#cfcfcf" stroke="#cfcfcf" stroke-width="0.6"/>
<path d="M1232.8,839.3 L1230.7,841.3 L1228.5,843.2 L1226.2,845.0 L1223.8,846.6 L1221.3,848.2 L1218.7,849.5 L1216.1,850.8 L1213.4,851.9 L1210.7,852.9 L1207.9,853.7 L1202.2,832.6 L1203.9,832.1 L1205.6,831.6 L1207.2,830.9 L1208.8,830.1 L1210.4,829.3 L1211.9,828.3 L1213.4,827.3 L1214.8,826.3 L1216.1,825.1 L1217.4,823.9Z" fill="#5c5c5c" stroke="#5c5c5c" stroke-width="0.6"/>
<path d="M1248.2,854.7 L1245.2,857.4 L1242.1,860.1 L1238.9,862.5 L1235.6,864.8 L1232.2,866.9 L1228.6,868.9 L1224.9,870.6 L1221.2,872.2 L1217.4,873.5 L1213.5,874.7 L1207.9,853.7 L1210.7,852.9 L1213.4,851.9 L1216.1,850.8 L1218.7,849.5 L1221.3,848.2 L1223.8,846.6 L1226.2,845.0 L1228.5,843.2 L1230.7,841.3 L1232.8,839.3Z" fill="#999999" stroke="#999999" stroke-width="0.6"/>
<path d="M1263.5,870.0 L1259.7,873.6 L1255.8,876.9 L1251.7,880.1 L1247.4,883.0 L1243.0,885.7 L1238.4,888.2 L1233.8,890.4 L1229.0,892.4 L1224.1,894.2 L1219.1,895.6 L1213.5,874.7 L1217.4,873.5 L1221.2,872.2 L1224.9,870.6 L1228.6,868.9 L1232.2,866.9 L1235.6,864.8 L1238.9,862.5 L1242.1,860.1 L1245.2,857.4 L1248.2,854.7Z" fill="#aaaaaa" stroke="#aaaaaa" stroke-width="0.6"/>
<path d="M1278.9,885.4 L1274.3,889.8 L1269.5,893.9 L1264.5,897.7 L1259.3,901.3 L1253.9,904.6 L1248.3,907.6 L1242.6,910.4 L1236.8,912.8 L1230.8,914.9 L1224.8,916.7 L1219.1,895.6 L1224.1,894.2 L1229.0,892.4 L1233.8,890.4 L1238.4,888.2 L1243.0,885.7 L1247.4,883.0 L1251.7,880.1 L1255.8,876.9 L1259.7,873.6 L1263.5,870.0Z" fill="#808080" stroke="#808080" stroke-width="0.6"/>
<path d="M1202.2,832.6 L1200.5,833.1 L1198.8,833.4 L1197.0,833.6 L1195.3,833.8 L1193.5,833.8 L1191.7,833.8 L1190.0,833.6 L1188.2,833.4 L1186.5,833.1 L1184.8,832.6 L1190.4,811.7 L1191.0,811.8 L1191.6,812.0 L1192.2,812.0 L1192.9,812.1 L1193.5,812.1 L1194.1,812.1 L1194.8,812.0 L1195.4,812.0 L1196.0,811.8 L1196.6,811.7Z" fill="#a4a4a4" stroke="#a4a4a4" stroke-width="0.6"/>
<path d="M1207.9,853.7 L1205.1,854.4 L1202.2,854.9 L1199.3,855.3 L1196.4,855.5 L1193.5,855.6 L1190.6,855.5 L1187.7,855.3 L1184.8,854.9 L1181.9,854.4 L1179.1,853.7 L1184.8,832.6 L1186.5,833.1 L1188.2,833.4 L1190.0,833.6 L1191.7,833.8 L1193.5,833.8 L1195.3,833.8 L1197.0,833.6 L1198.8,833.4 L1200.5,833.1 L1202.2,832.6Z" fill="#e3e3e3" stroke="#e3e3e3" stroke-width="0.6"/>
<path d="M1213.5,874.7 L1209.6,875.6 L1205.6,876.3 L1201.6,876.9 L1197.5,877.2 L1193.5,877.3 L1189.5,877.2 L1185.4,876.9 L1181.4,876.3 L1177.4,875.6 L1173.5,874.7 L1179.1,853.7 L1181.9,854.4 L1184.8,854.9 L1187.7,855.3 L1190.6,855.5 L1193.5,855.6 L1196.4,855.5 L1199.3,855.3 L1202.2,854.9 L1205.1,854.4 L1207.9,853.7Z" fill="#cfcfcf" stroke="#cfcfcf" stroke-width="0.6"/>
<path d="M1219.1,895.6 L1214.1,896.8 L1209.0,897.8 L1203.8,898.5 L1198.7,898.9 L1193.5,899.0 L1188.3,898.9 L1183.2,898.5 L1178.0,897.8 L1172.9,896.8 L1167.9,895.6 L1173.5,874.7 L1177.4,875.6 L1181.4,876.3 L1185.4,876.9 L1189.5,877.2 L1193.5,877.3 L1197.5,877.2 L1201.6,876.9 L1205.6,876.3 L1209.6,875.6 L1213.5,874.7Z" fill="#b0b0b0" stroke="#b0b0b0" stroke-width="0.6"/>
<path d="M1224.8,916.7 L1218.6,918.2 L1212.4,919.3 L1206.1,920.1 L1199.8,920.6 L1193.5,920.8 L1187.2,920.6 L1180.9,920.1 L1174.6,919.3 L1168.4,918.2 L1162.2,916.7 L1167.9,895.6 L1172.9,896.8 L1178.0,897.8 L1183.2,898.5 L1188.3,898.9 L1193.5,899.0 L1198.7,898.9 L1203.8,898.5 L1209.0,897.8 L1214.1,896.8 L1219.1,895.6Z" fill="#000000" stroke="#000000" stroke-width="0.6"/>
<path d="M1184.8,832.6 L1183.1,832.1 L1181.4,831.6 L1179.8,830.9 L1178.2,830.1 L1176.6,829.3 L1175.1,828.3 L1173.6,827.3 L1172.2,826.3 L1170.9,825.1 L1169.6,823.9 L1184.9,808.6 L1185.4,809.0 L1185.9,809.4 L1186.4,809.8 L1186.9,810.1 L1187.5,810.5 L1188.0,810.8 L1188.6,811.1 L1189.2,811.3 L1189.8,811.5 L1190.4,811.7Z" fill="#dadada" stroke="#dadada" stroke-width="0.6"/>
<path d="M1179.1,853.7 L1176.3,852.9 L1173.6,851.9 L1170.9,850.8 L1168.3,849.5 L1165.7,848.2 L1163.2,846.6 L1160.8,845.0 L1158.5,843.2 L1156.3,841.3 L1154.2,839.3 L1169.6,823.9 L1170.9,825.1 L1172.2,826.3 L1173.6,827.3 L1175.1,828.3 L1176.6,829.3 L1178.2,830.1 L1179.8,830.9 L1181.4,831.6 L1183.1,832.1 L1184.8,832.6Z" fill="#c6c6c6" stroke="#c6c6c6" stroke-width="0.6"/>
<path d="M1173.5,874.7 L1169.6,873.5 L1165.8,872.2 L1162.1,870.6 L1158.4,868.9 L1154.8,866.9 L1151.4,864.8 L1148.1,862.5 L1144.9,860.1 L1141.8,857.4 L1138.8,854.7 L1154.2,839.3 L1156.3,841.3 L1158.5,843.2 L1160.8,845.0 L1163.2,846.6 L1165.7,848.2 L1168.3,849.5 L1170.9,850.8 L1173.6,851.9 L1176.3,852.9 L1179.1,853.7Z" fill="#eeeeee" stroke="#eeeeee" stroke-width="0.6"/>
<path d="M1167.9,895.6 L1162.9,894.2 L1158.0,892.4 L1153.2,890.4 L1148.6,888.2 L1144.0,885.7 L1139.6,883.0 L1135.3,880.1 L1131.2,876.9 L1127.3,873.6 L1123.5,870.0 L1138.8,854.7 L1141.8,857.4 L1144.9,860.1 L1148.1,862.5 L1151.4,864.8 L1154.8,866.9 L1158.4,868.9 L1162.1,870.6 L1165.8,872.2 L1169.6,873.5 L1173.5,874.7Z" fill="#d0d0d0" stroke="#d0d0d0" stroke-width="0.6"/>
<path d="M1162.2,916.7 L1156.2,914.9 L1150.2,912.8 L1144.4,910.4 L1138.7,907.6 L1133.1,904.6 L1127.7,901.3 L1122.5,897.7 L1117.5,893.9 L1112.7,889.8 L1108.1,885.4 L1123.5,870.0 L1127.3,873.6 L1131.2,876.9 L1135.3,880.1 L1139.6,883.0 L1144.0,885.7 L1148.6,888.2 L1153.2,890.4 L1158.0,892.4 L1162.9,894.2 L1167.9,895.6Z" fill="#e8e8e8" stroke="#e8e8e8" stroke-width="0.6"/>
<path d="M1169.6,823.9 L1168.4,822.6 L1167.2,821.3 L1166.2,819.9 L1165.2,818.4 L1164.2,816.9 L1163.4,815.3 L1162.6,813.7 L1161.9,812.1 L1161.4,810.4 L1160.9,808.7 L1181.8,803.1 L1182.0,803.7 L1182.2,804.3 L1182.4,804.9 L1182.7,805.5 L1183.0,806.0 L1183.4,806.6 L1183.7,807.1 L1184.1,807.6 L1184.5,808.1 L1184.9,808.6Z" fill="#fafafa" stroke="#fafafa" stroke-width="0.6"/>
<path d="M1154.2,839.3 L1152.2,837.2 L1150.3,835.0 L1148.5,832.7 L1146.9,830.3 L1145.3,827.8 L1144.0,825.2 L1142.7,822.6 L1141.6,819.9 L1140.6,817.2 L1139.8,814.4 L1160.9,808.7 L1161.4,810.4 L1161.9,812.1 L1162.6,813.7 L1163.4,815.3 L1164.2,816.9 L1165.2,818.4 L1166.2,819.9 L1167.2,821.3 L1168.4,822.6 L1169.6,823.9Z" fill="#aaaaaa" stroke="#aaaaaa" stroke-width="0.6"/>
<path d="M1138.8,854.7 L1136.1,851.7 L1133.4,848.6 L1131.0,845.4 L1128.7,842.1 L1126.6,838.7 L1124.6,835.1 L1122.9,831.4 L1121.3,827.7 L1120.0,823.9 L1118.8,820.0 L1139.8,814.4 L1140.6,817.2 L1141.6,819.9 L1142.7,822.6 L1144.0,825.2 L1145.3,827.8 L1146.9,830.3 L1148.5,832.7 L1150.3,835.0 L1152.2,837.2 L1154.2,839.3Z" fill="#bdbdbd" stroke="#bdbdbd" stroke-width="0.6"/>
<path d="M1123.5,870.0 L1119.9,866.2 L1116.6,862.3 L1113.4,858.2 L1110.5,853.9 L1107.8,849.5 L1105.3,844.9 L1103.1,840.3 L1101.1,835.5 L1099.3,830.6 L1097.9,825.6 L1118.8,820.0 L1120.0,823.9 L1121.3,827.7 L1122.9,831.4 L1124.6,835.1 L1126.6,838.7 L1128.7,842.1 L1131.0,845.4 L1133.4,848.6 L1136.1,851.7 L1138.8,854.7Z" fill="#c9c9c9" stroke="#c9c9c9" stroke-width="0.6"/>
<path d="M1108.1,885.4 L1103.7,880.8 L1099.6,876.0 L1095.8,871.0 L1092.2,865.8 L1088.9,860.4 L1085.9,854.8 L1083.1,849.1 L1080.7,843.3 L1078.6,837.3 L1076.8,831.3 L1097.9,825.6 L1099.3,830.6 L1101.1,835.5 L1103.1,840.3 L1105.3,844.9 L1107.8,849.5 L1110.5,853.9 L1113.4,858.2 L1116.6,862.3 L1119.9,866.2 L1123.5,870.0Z" fill="#cbcbcb" stroke="#cbcbcb" stroke-width="0.6"/>
<path d="M1160.9,808.7 L1160.4,807.0 L1160.1,805.3 L1159.9,803.5 L1159.7,801.8 L1159.7,800.0 L1159.7,798.2 L1159.9,796.5 L1160.1,794.7 L1160.4,793.0 L1160.9,791.3 L1181.8,796.9 L1181.7,797.5 L1181.5,798.1 L1181.5,798.7 L1181.4,799.4 L1181.4,800.0 L1181.4,800.6 L1181.5,801.3 L1181.5,801.9 L1181.7,802.5 L1181.8,803.1Z" fill="#f5f5f5" stroke="#f5f5f5" stroke-width="0.6"/>
<path d="M1139.8,814.4 L1139.1,811.6 L1138.6,808.7 L1138.2,805.8 L1138.0,802.9 L1137.9,800.0 L1138.0,797.1 L1138.2,794.2 L1138.6,791.3 L1139.1,788.4 L1139.8,785.6 L1160.9,791.3 L1160.4,793.0 L1160.1,794.7 L1159.9,796.5 L1159.7,798.2 L1159.7,800.0 L1159.7,801.8 L1159.9,803.5 L1160.1,805.3 L1160.4,807.0 L1160.9,808.7Z" fill="#a6a6a6" stroke="#a6a6a6" stroke-width="0.6"/>
<path d="M1118.8,820.0 L1117.9,816.1 L1117.2,812.1 L1116.6,808.1 L1116.3,804.0 L1116.2,800.0 L1116.3,796.0 L1116.6,791.9 L1117.2,787.9 L1117.9,783.9 L1118.8,780.0 L1139.8,785.6 L1139.1,788.4 L1138.6,791.3 L1138.2,794.2 L1138.0,797.1 L1137.9,800.0 L1138.0,802.9 L1138.2,805.8 L1138.6,808.7 L1139.1,811.6 L1139.8,814.4Z" fill="#a9a9a9" stroke="#a9a9a9" stroke-width="0.6"/>
<path d="M1097.9,825.6 L1096.7,820.6 L1095.7,815.5 L1095.0,810.3 L1094.6,805.2 L1094.5,800.0 L1094.6,794.8 L1095.0,789.7 L1095.7,784.5 L1096.7,779.4 L1097.9,774.4 L1118.8,780.0 L1117.9,783.9 L1117.2,787.9 L1116.6,791.9 L1116.3,796.0 L1116.2,800.0 L1116.3,804.0 L1116.6,808.1 L1117.2,812.1 L1117.9,816.1 L1118.8,820.0Z" fill="#a0a0a0" stroke="#a0a0a0" stroke-width="0.6"/>
<path d="M1076.8,831.3 L1075.3,825.1 L1074.2,818.9 L1073.4,812.6 L1072.9,806.3 L1072.7,800.0 L1072.9,793.7 L1073.4,787.4 L1074.2,781.1 L1075.3,774.9 L1076.8,768.7 L1097.9,774.4 L1096.7,779.4 L1095.7,784.5 L1095.0,789.7 L1094.6,794.8 L1094.5,800.0 L1094.6,805.2 L1095.0,810.3 L1095.7,815.5 L1096.7,820.6 L1097.9,825.6Z" fill="#ababab" stroke="#ababab" stroke-width="0.6"/>
<path d="M1160.9,791.3 L1161.4,789.6 L1161.9,787.9 L1162.6,786.3 L1163.4,784.7 L1164.2,783.1 L1165.2,781.6 L1166.2,780.1 L1167.2,778.7 L1168.4,777.4 L1169.6,776.1 L1184.9,791.4 L1184.5,791.9 L1184.1,792.4 L1183.7,792.9 L1183.4,793.4 L1183.0,794.0 L1182.7,794.5 L1182.4,795.1 L1182.2,795.7 L1182.0,796.3 L1181.8,796.9Z" fill="#d8d8d8" stroke="#d8d8d8" stroke-width="0.6"/>
<path d="M1139.8,785.6 L1140.6,782.8 L1141.6,780.1 L1142.7,777.4 L1144.0,774.8 L1145.3,772.2 L1146.9,769.7 L1148.5,767.3 L1150.3,765.0 L1152.2,762.8 L1154.2,760.7 L1169.6,776.1 L1168.4,777.4 L1167.2,778.7 L1166.2,780.1 L1165.2,781.6 L1164.2,783.1 L1163.4,784.7 L1162.6,786.3 L1161.9,787.9 L1161.4,789.6 L1160.9,791.3Z" fill="#a9a9a9" stroke="#a9a9a9" stroke-width="0.6"/>
<path d="M1118.8,780.0 L1120.0,776.1 L1121.3,772.3 L1122.9,768.6 L1124.6,764.9 L1126.6,761.4 L1128.7,757.9 L1131.0,754.6 L1133.4,751.4 L1136.1,748.3 L1138.8,745.3 L1154.2,760.7 L1152.2,762.8 L1150.3,765.0 L1148.5,767.3 L1146.9,769.7 L1145.3,772.2 L1144.0,774.8 L1142.7,777.4 L1141.6,780.1 L1140.6,782.8 L1139.8,785.6Z" fill="#a6a6a6" stroke="#a6a6a6" stroke-width="0.6"/>
<path d="M1097.9,774.4 L1099.3,769.4 L1101.1,764.5 L1103.1,759.7 L1105.3,755.1 L1107.8,750.5 L1110.5,746.1 L1113.4,741.8 L1116.6,737.7 L1119.9,733.8 L1123.5,730.0 L1138.8,745.3 L1136.1,748.3 L1133.4,751.4 L1131.0,754.6 L1128.7,757.9 L1126.6,761.4 L1124.6,764.9 L1122.9,768.6 L1121.3,772.3 L1120.0,776.1 L1118.8,780.0Z" fill="#b4b4b4" stroke="#b4b4b4" stroke-width="0.6"/>
<path d="M1076.8,768.7 L1078.6,762.7 L1080.7,756.7 L1083.1,750.9 L1085.9,745.2 L1088.9,739.6 L1092.2,734.2 L1095.8,729.0 L1099.6,724.0 L1103.7,719.2 L1108.1,714.6 L1123.5,730.0 L1119.9,733.8 L1116.6,737.7 L1113.4,741.8 L1110.5,746.1 L1107.8,750.5 L1105.3,755.1 L1103.1,759.7 L1101.1,764.5 L1099.3,769.4 L1097.9,774.4Z" fill="#9a9a9a" stroke="#9a9a9a" stroke-width="0.6"/>
<path d="M1169.6,776.1 L1170.9,774.9 L1172.2,773.7 L1173.6,772.7 L1175.1,771.7 L1176.6,770.7 L1178.2,769.9 L1179.8,769.1 L1181.4,768.4 L1183.1,767.9 L1184.8,767.4 L1190.4,788.3 L1189.8,788.5 L1189.2,788.7 L1188.6,788.9 L1188.0,789.2 L1187.5,789.5 L1186.9,789.9 L1186.4,790.2 L1185.9,790.6 L1185.4,791.0 L1184.9,791.4Z" fill="#ececec" stroke="#ececec" stroke-width="0.6"/>
<path d="M1154.2,760.7 L1156.3,758.7 L1158.5,756.8 L1160.8,755.0 L1163.2,753.4 L1165.7,751.8 L1168.3,750.5 L1170.9,749.2 L1173.6,748.1 L1176.3,747.1 L1179.1,746.3 L1184.8,767.4 L1183.1,767.9 L1181.4,768.4 L1179.8,769.1 L1178.2,769.9 L1176.6,770.7 L1175.1,771.7 L1173.6,772.7 L1172.2,773.7 L1170.9,774.9 L1169.6,776.1Z" fill="#b4b4b4" stroke="#b4b4b4" stroke-width="0.6"/>
<path d="M1138.8,745.3 L1141.8,742.6 L1144.9,739.9 L1148.1,737.5 L1151.4,735.2 L1154.8,733.1 L1158.4,731.1 L1162.1,729.4 L1165.8,727.8 L1169.6,726.5 L1173.5,725.3 L1179.1,746.3 L1176.3,747.1 L1173.6,748.1 L1170.9,749.2 L1168.3,750.5 L1165.7,751.8 L1163.2,753.4 L1160.8,755.0 L1158.5,756.8 L1156.3,758.7 L1154.2,760.7Z" fill="#a0a0a0" stroke="#a0a0a0" stroke-width="0.6"/>
<path d="M1123.5,730.0 L1127.3,726.4 L1131.2,723.1 L1135.3,719.9 L1139.6,717.0 L1144.0,714.3 L1148.6,711.8 L1153.2,709.6 L1158.0,707.6 L1162.9,705.8 L1167.9,704.4 L1173.5,725.3 L1169.6,726.5 L1165.8,727.8 L1162.1,729.4 L1158.4,731.1 L1154.8,733.1 L1151.4,735.2 L1148.1,737.5 L1144.9,739.9 L1141.8,742.6 L1138.8,745.3Z" fill="#a5a5a5" stroke="#a5a5a5" stroke-width="0.6"/>
<path d="M1108.1,714.6 L1112.7,710.2 L1117.5,706.1 L1122.5,702.3 L1127.7,698.7 L1133.1,695.4 L1138.7,692.4 L1144.4,689.6 L1150.2,687.2 L1156.2,685.1 L1162.2,683.3 L1167.9,704.4 L1162.9,705.8 L1158.0,707.6 L1153.2,709.6 L1148.6,711.8 L1144.0,714.3 L1139.6,717.0 L1135.3,719.9 L1131.2,723.1 L1127.3,726.4 L1123.5,730.0Z" fill="#b2b2b2" stroke="#b2b2b2" stroke-width="0.6"/>
<text x="1044.5" y="683.9" text-anchor="end" font-size="12.5" fill="#404040">-100</text>
<text x="1044.5" y="744.3" text-anchor="end" font-size="12.5" fill="#404040">-50</text>
<text x="1044.5" y="804.6" text-anchor="end" font-size="12.5" fill="#404040">0</text>
<text x="1044.5" y="865.0" text-anchor="end" font-size="12.5" fill="#404040">50</text>
<text x="1044.5" y="925.4" text-anchor="end" font-size="12.5" fill="#404040">100</text>
<text x="1072.6" y="938.6" text-anchor="middle" font-size="12.5" fill="#404040">-100</text>
<text x="1133.1" y="938.6" text-anchor="middle" font-size="12.5" fill="#404040">-50</text>
<text x="1193.5" y="938.6" text-anchor="middle" font-size="12.5" fill="#404040">0</text>
<text x="1253.9" y="938.6" text-anchor="middle" font-size="12.5" fill="#404040">50</text>
<text x="1314.4" y="938.6" text-anchor="middle" font-size="12.5" fill="#404040">100</text>
<text x="1193.5" y="675.6" text-anchor="middle" font-size="13.8" font-weight="bold" fill="#111">Roughness Patches Far from the Site</text>
<rect x="1349.9" y="680.6" width="21.2" height="239" fill="url(#cb2)" stroke="#0000c8" stroke-width="1.3"/>
<text x="1342.5" y="682.8" text-anchor="end" font-size="11.2" fill="#3636c4" style="white-space:pre">z<tspan font-size="7.6" dy="2.5">o</tspan><tspan dy="-2.5">=1  m</tspan></text>
<text x="1342.5" y="724.9" text-anchor="end" font-size="11.2" fill="#3636c4" style="white-space:pre">z<tspan font-size="7.6" dy="2.5">o</tspan><tspan dy="-2.5">=0.3  m</tspan></text>
<line x1="1350" y1="720.6" x2="1353" y2="720.6" stroke="#0000c8"/>
<text x="1342.5" y="763.0" text-anchor="end" font-size="11.2" fill="#3636c4" style="white-space:pre">z<tspan font-size="7.6" dy="2.5">o</tspan><tspan dy="-2.5">=0.1  m</tspan></text>
<line x1="1350" y1="758.7" x2="1353" y2="758.7" stroke="#0000c8"/>
<text x="1342.5" y="805.1" text-anchor="end" font-size="11.2" fill="#3636c4" style="white-space:pre">z<tspan font-size="7.6" dy="2.5">o</tspan><tspan dy="-2.5">=0.03  m</tspan></text>
<line x1="1350" y1="800.8" x2="1353" y2="800.8" stroke="#0000c8"/>
<text x="1342.5" y="843.5" text-anchor="end" font-size="11.2" fill="#3636c4" style="white-space:pre">z<tspan font-size="7.6" dy="2.5">o</tspan><tspan dy="-2.5">=0.01  m</tspan></text>
<line x1="1350" y1="839.2" x2="1353" y2="839.2" stroke="#0000c8"/>
<text x="1342.5" y="885.3" text-anchor="end" font-size="11.2" fill="#3636c4" style="white-space:pre">z<tspan font-size="7.6" dy="2.5">o</tspan><tspan dy="-2.5">=0.003  m</tspan></text>
<line x1="1350" y1="881" x2="1353" y2="881" stroke="#0000c8"/>
</svg>
</body></html>
